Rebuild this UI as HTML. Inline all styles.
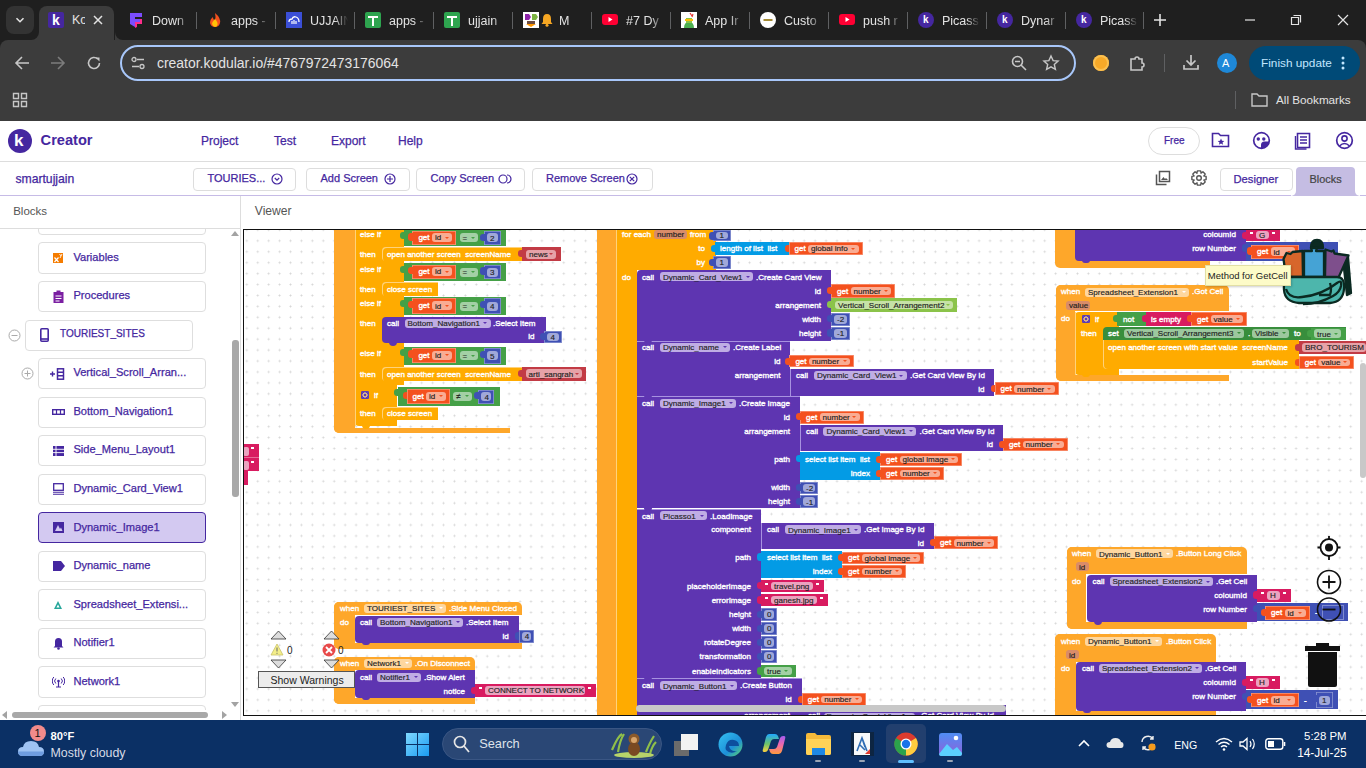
<!DOCTYPE html>
<html><head><meta charset="utf-8">
<style>
*{box-sizing:border-box;margin:0;padding:0}
html,body{width:1366px;height:768px;overflow:hidden;background:#fff;font-family:"Liberation Sans",sans-serif}
.a{position:absolute}
.t{white-space:nowrap}
</style></head><body>

<div class="a" style="left:0.0px;top:0.0px;width:1366.0px;height:50.0px;background:#1f1f1f;"></div>
<div class="a" style="left:6.0px;top:6.0px;width:28.0px;height:28.0px;background:#333333;border-radius:8px"></div>
<svg class="a" style="left:14px;top:14px" width="12" height="12" viewBox="0 0 12 12"><path d="M2.5 4.2l3.5 3.5 3.5-3.5" fill="none" stroke="#e3e3e3" stroke-width="1.6"/></svg>
<div class="a" style="left:39.3px;top:6.0px;width:75.2px;height:34.0px;background:#3c3c3c;border-radius:8px 8px 0 0"></div>
<div class="a" style="left:31.3px;top:32.0px;width:8.0px;height:8.0px;background:#3c3c3c;"></div>
<div class="a" style="left:31.3px;top:32.0px;width:8.0px;height:8.0px;background:#1f1f1f;border-bottom-right-radius:8px"></div>
<div class="a" style="left:114.5px;top:32.0px;width:8.0px;height:8.0px;background:#3c3c3c;"></div>
<div class="a" style="left:114.5px;top:32.0px;width:8.0px;height:8.0px;background:#1f1f1f;border-bottom-left-radius:8px"></div>
<div class="a" style="left:48.0px;top:12.0px;width:16.0px;height:16.0px;background:#4527a0;border-radius:2px"></div>
<div class="a t" style="left:52.0px;top:12.0px;height:16px;line-height:16px;color:#fff;font-size:14px;font-weight:bold">k</div>
<div class="a t" style="left:72px;top:13px;width:13px;overflow:hidden;color:#e3e3e3;font-size:12.5px;line-height:15px">Ko</div>
<svg class="a" style="left:92px;top:14px" width="12" height="12" viewBox="0 0 12 12"><path d="M2 2l8 8M10 2l-8 8" stroke="#e3e3e3" stroke-width="1.5"/></svg>
<svg class="a" style="left:128px;top:12px" width="16" height="16" viewBox="0 0 16 16"><path d="M2 1h12v4H7v2h6v3H7v5l-5-3z" fill="#7b4dff"/><path d="M7 10h5v-3h2v5H9v3l-2 1z" fill="#ff2d8a"/></svg>
<div class="a t" style="left:152px;top:14px;width:38px;overflow:hidden;color:#e3e3e3;font-size:12.5px;line-height:15px;-webkit-mask-image:linear-gradient(90deg,#000 65%,transparent)">Down</div>
<div class="a" style="left:196.0px;top:12.0px;width:1.0px;height:17.0px;background:#5f6062;"></div>
<svg class="a" style="left:207px;top:12px" width="16" height="16" viewBox="0 0 16 16"><path d="M8 1q6 5 5 10-1 4-5 4t-5-4q0-4 3-6 0 3 2 3 1-3 0-7z" fill="#f4511e"/><path d="M8 7q3 3 2.5 5.5T8 15t-3-3q0-2 3-5z" fill="#ffc107"/></svg>
<div class="a t" style="left:231px;top:14px;width:38px;overflow:hidden;color:#e3e3e3;font-size:12.5px;line-height:15px;-webkit-mask-image:linear-gradient(90deg,#000 65%,transparent)">apps -</div>
<div class="a" style="left:275.0px;top:12.0px;width:1.0px;height:17.0px;background:#5f6062;"></div>
<svg class="a" style="left:286px;top:12px" width="16" height="16" viewBox="0 0 16 16"><rect width="16" height="16" fill="#3b4fd6"/><path d="M3 10q0-3 3-3 1-3 4-2 3 1 3 5" fill="none" stroke="#fff" stroke-width="1.3"/><path d="M6 9v3M8 8v4M10 9v3" stroke="#fff" stroke-width="1.2"/></svg>
<div class="a t" style="left:310px;top:14px;width:38px;overflow:hidden;color:#e3e3e3;font-size:12.5px;line-height:15px;-webkit-mask-image:linear-gradient(90deg,#000 65%,transparent)">UJJAIN</div>
<div class="a" style="left:354.0px;top:12.0px;width:1.0px;height:17.0px;background:#5f6062;"></div>
<svg class="a" style="left:365px;top:12px" width="16" height="16" viewBox="0 0 16 16"><rect width="16" height="16" rx="2" fill="#2ea44f"/><path d="M3 5h10M8 5v9" stroke="#fff" stroke-width="2"/></svg>
<div class="a t" style="left:389px;top:14px;width:38px;overflow:hidden;color:#e3e3e3;font-size:12.5px;line-height:15px;-webkit-mask-image:linear-gradient(90deg,#000 65%,transparent)">apps -</div>
<div class="a" style="left:433.0px;top:12.0px;width:1.0px;height:17.0px;background:#5f6062;"></div>
<svg class="a" style="left:444px;top:12px" width="16" height="16" viewBox="0 0 16 16"><rect width="16" height="16" rx="2" fill="#2ea44f"/><path d="M3 5h10M8 5v9" stroke="#fff" stroke-width="2"/></svg>
<div class="a t" style="left:468px;top:14px;width:38px;overflow:hidden;color:#e3e3e3;font-size:12.5px;line-height:15px;-webkit-mask-image:linear-gradient(90deg,#000 65%,transparent)">ujjain</div>
<div class="a" style="left:512.0px;top:12.0px;width:1.0px;height:17.0px;background:#5f6062;"></div>
<svg class="a" style="left:523px;top:12px" width="16" height="16" viewBox="0 0 16 16"><rect width="16" height="16" fill="#fff"/><path d="M2 2l4 0 2 3-2 3H2z" fill="#8e24aa"/><path d="M9 2h4l2 3-2 3H9z" fill="#7cb342"/><path d="M4 9h8v3H4z" fill="#6d4c41"/><path d="M3 12l5 3 5-3z" fill="#ff9800"/></svg>
<svg class="a" style="left:541px;top:13px" width="12" height="14" viewBox="0 0 12 14"><path d="M6 1q4 0 4 5v3l1.5 2H.5L2 9V6q0-5 4-5z" fill="#f5a623"/><circle cx="6" cy="12.3" r="1.5" fill="#f5a623"/></svg>
<div class="a t" style="left:559px;top:14px;width:26px;overflow:hidden;color:#e3e3e3;font-size:12.5px;line-height:15px;-webkit-mask-image:linear-gradient(90deg,#000 65%,transparent)">M</div>
<div class="a" style="left:591.0px;top:12.0px;width:1.0px;height:17.0px;background:#5f6062;"></div>
<svg class="a" style="left:602px;top:13px" width="16" height="14" viewBox="0 0 16 14"><rect y="1" width="16" height="11" rx="3" fill="#ff0033"/><path d="M6.5 4v5l4-2.5z" fill="#fff"/></svg>
<div class="a t" style="left:626px;top:14px;width:38px;overflow:hidden;color:#e3e3e3;font-size:12.5px;line-height:15px;-webkit-mask-image:linear-gradient(90deg,#000 65%,transparent)">#7 Dy</div>
<div class="a" style="left:670.0px;top:12.0px;width:1.0px;height:17.0px;background:#5f6062;"></div>
<svg class="a" style="left:681px;top:12px" width="16" height="16" viewBox="0 0 16 16"><rect width="16" height="16" fill="#fff"/><path d="M3 16q0-6 5-6t5 6z" fill="#4caf50"/><path d="M5 6h6v5H5z" fill="#8bc34a"/><path d="M9 1l2 3M12 2l-1 3" stroke="#e53935" stroke-width="1.2"/><path d="M4 8h8" stroke="#ffc107" stroke-width="2"/></svg>
<div class="a t" style="left:705px;top:14px;width:38px;overflow:hidden;color:#e3e3e3;font-size:12.5px;line-height:15px;-webkit-mask-image:linear-gradient(90deg,#000 65%,transparent)">App Ir</div>
<div class="a" style="left:749.0px;top:12.0px;width:1.0px;height:17.0px;background:#5f6062;"></div>
<svg class="a" style="left:760px;top:12px" width="16" height="16" viewBox="0 0 16 16"><circle cx="8" cy="8" r="8" fill="#fff"/><path d="M3.5 8h9" stroke="#8d6e00" stroke-width="1.6"/></svg>
<div class="a t" style="left:784px;top:14px;width:38px;overflow:hidden;color:#e3e3e3;font-size:12.5px;line-height:15px;-webkit-mask-image:linear-gradient(90deg,#000 65%,transparent)">Custo</div>
<div class="a" style="left:828.0px;top:12.0px;width:1.0px;height:17.0px;background:#5f6062;"></div>
<svg class="a" style="left:839px;top:13px" width="16" height="14" viewBox="0 0 16 14"><rect y="1" width="16" height="11" rx="3" fill="#ff0033"/><path d="M6.5 4v5l4-2.5z" fill="#fff"/></svg>
<div class="a t" style="left:863px;top:14px;width:38px;overflow:hidden;color:#e3e3e3;font-size:12.5px;line-height:15px;-webkit-mask-image:linear-gradient(90deg,#000 65%,transparent)">push r</div>
<div class="a" style="left:907.0px;top:12.0px;width:1.0px;height:17.0px;background:#5f6062;"></div>
<div class="a" style="left:918.0px;top:12.0px;width:16.0px;height:16.0px;background:#4527a0;border-radius:50%"></div>
<div class="a t" style="left:923.0px;top:13.0px;height:14px;line-height:14px;color:#fff;font-size:10px;font-weight:bold">k</div>
<div class="a t" style="left:942px;top:14px;width:38px;overflow:hidden;color:#e3e3e3;font-size:12.5px;line-height:15px;-webkit-mask-image:linear-gradient(90deg,#000 65%,transparent)">Picass</div>
<div class="a" style="left:986.0px;top:12.0px;width:1.0px;height:17.0px;background:#5f6062;"></div>
<div class="a" style="left:997.0px;top:12.0px;width:16.0px;height:16.0px;background:#4527a0;border-radius:50%"></div>
<div class="a t" style="left:1002.0px;top:13.0px;height:14px;line-height:14px;color:#fff;font-size:10px;font-weight:bold">k</div>
<div class="a t" style="left:1021px;top:14px;width:38px;overflow:hidden;color:#e3e3e3;font-size:12.5px;line-height:15px;-webkit-mask-image:linear-gradient(90deg,#000 65%,transparent)">Dynar</div>
<div class="a" style="left:1065.0px;top:12.0px;width:1.0px;height:17.0px;background:#5f6062;"></div>
<div class="a" style="left:1076.0px;top:12.0px;width:16.0px;height:16.0px;background:#4527a0;border-radius:50%"></div>
<div class="a t" style="left:1081.0px;top:13.0px;height:14px;line-height:14px;color:#fff;font-size:10px;font-weight:bold">k</div>
<div class="a t" style="left:1100px;top:14px;width:38px;overflow:hidden;color:#e3e3e3;font-size:12.5px;line-height:15px;-webkit-mask-image:linear-gradient(90deg,#000 65%,transparent)">Picass</div>
<div class="a" style="left:1143.0px;top:12.0px;width:1.0px;height:17.0px;background:#5f6062;"></div>
<svg class="a" style="left:1153px;top:13px" width="14" height="14" viewBox="0 0 14 14"><path d="M7 1v12M1 7h12" stroke="#e3e3e3" stroke-width="1.6"/></svg>
<svg class="a" style="left:1244px;top:14px" width="12" height="12" viewBox="0 0 12 12"><path d="M1 6h10" stroke="#e3e3e3" stroke-width="1.2"/></svg>
<svg class="a" style="left:1290px;top:14px" width="12" height="12" viewBox="0 0 12 12"><path d="M1.5 3.5h7v7h-7z M3.5 1.5h7v7" fill="none" stroke="#e3e3e3" stroke-width="1.2"/></svg>
<svg class="a" style="left:1337px;top:14px" width="12" height="12" viewBox="0 0 12 12"><path d="M1 1l10 10M11 1l-10 10" stroke="#e3e3e3" stroke-width="1.2"/></svg>
<div class="a" style="left:0.0px;top:40.0px;width:1366.0px;height:81.0px;background:#3c3c3c;border-radius:8px 8px 0 0"></div>
<svg class="a" style="left:14px;top:55px" width="16" height="16" viewBox="0 0 16 16"><path d="M15 8H2M8 2L2 8l6 6" fill="none" stroke="#c7c7c7" stroke-width="1.6"/></svg>
<svg class="a" style="left:50px;top:55px" width="16" height="16" viewBox="0 0 16 16"><path d="M1 8h13M8 2l6 6-6 6" fill="none" stroke="#7c7c7c" stroke-width="1.6"/></svg>
<svg class="a" style="left:86px;top:55px" width="16" height="16" viewBox="0 0 16 16"><path d="M13.5 8A5.5 5.5 0 1 1 11.8 4" fill="none" stroke="#c7c7c7" stroke-width="1.6"/><path d="M9.5 2.5h4v4z" fill="#c7c7c7"/></svg>
<div class="a" style="left:120.0px;top:45.0px;width:956.0px;height:36.0px;background:#3c3c3c;border:2px solid #a8c7fa;border-radius:18px"></div>
<svg class="a" style="left:131px;top:56px" width="14" height="14" viewBox="0 0 14 14"><circle cx="3" cy="3.5" r="2" fill="none" stroke="#c7c7c7" stroke-width="1.3"/><path d="M6 3.5h7M1 10.5h7" stroke="#c7c7c7" stroke-width="1.3"/><circle cx="11" cy="10.5" r="2" fill="none" stroke="#c7c7c7" stroke-width="1.3"/></svg>
<div class="a t" style="left:157.0px;top:54.0px;height:18px;line-height:18px;color:#e3e3e3;font-size:13.95px;">creator.kodular.io/#4767972473176064</div>
<svg class="a" style="left:1010px;top:54px" width="18" height="18" viewBox="0 0 18 18"><circle cx="7.5" cy="7.5" r="5" fill="none" stroke="#c7c7c7" stroke-width="1.6"/><path d="M11 11l5 5M5 7.5h5" stroke="#c7c7c7" stroke-width="1.6"/></svg>
<svg class="a" style="left:1042px;top:54px" width="18" height="18" viewBox="0 0 18 18"><path d="M9 2l2.1 4.6 5 .5-3.8 3.4 1.1 4.9L9 12.8 4.6 15.4l1.1-4.9L1.9 7.1l5-.5z" fill="none" stroke="#c7c7c7" stroke-width="1.4"/></svg>
<div class="a" style="left:1093.0px;top:55.0px;width:16.0px;height:16.0px;background:#f7a928;border-radius:50%;box-shadow:inset 0 0 0 2px #fbc050"></div>
<svg class="a" style="left:1128px;top:54px" width="18" height="18" viewBox="0 0 18 18"><path d="M3 5h4a2 2 0 0 1 4 0h3v4a2 2 0 0 1 0 4v3H3z" fill="none" stroke="#c7c7c7" stroke-width="1.6"/></svg>
<div class="a" style="left:1164.0px;top:54.0px;width:1.0px;height:18.0px;background:#5f6062;"></div>
<svg class="a" style="left:1182px;top:53px" width="18" height="18" viewBox="0 0 18 18"><path d="M9 2v10M4.5 7.5L9 12l4.5-4.5M2 12v4h14v-4" fill="none" stroke="#c7c7c7" stroke-width="1.7"/></svg>
<div class="a" style="left:1217.0px;top:53.0px;width:20.0px;height:20.0px;background:#1a73e8;border-radius:50%;background:#1e88d8"></div>
<div class="a t" style="left:1222.0px;top:56.0px;height:14px;line-height:14px;color:#fff;font-size:11px;">A</div>
<div class="a" style="left:1249.0px;top:46.0px;width:111.0px;height:34.0px;background:#004a77;border-radius:17px"></div>
<div class="a t" style="left:1261.0px;top:54.0px;height:18px;line-height:18px;color:#c2e7ff;font-size:11.8px;">Finish update</div>
<svg class="a" style="left:1339px;top:55px" width="8" height="16" viewBox="0 0 8 16"><circle cx="4" cy="3" r="1.5" fill="#c2e7ff"/><circle cx="4" cy="8" r="1.5" fill="#c2e7ff"/><circle cx="4" cy="13" r="1.5" fill="#c2e7ff"/></svg>
<svg class="a" style="left:12px;top:92px" width="16" height="16" viewBox="0 0 16 16"><path d="M1.5 1.5h5v5h-5zM9.5 1.5h5v5h-5zM1.5 9.5h5v5h-5zM9.5 9.5h5v5h-5z" fill="none" stroke="#c7c7c7" stroke-width="1.4"/></svg>
<div class="a" style="left:1235.0px;top:91.0px;width:1.0px;height:18.0px;background:#5f6062;"></div>
<svg class="a" style="left:1251px;top:92px" width="17" height="15" viewBox="0 0 17 15"><path d="M1 2h5l2 2h8v10H1z" fill="none" stroke="#c7c7c7" stroke-width="1.4"/></svg>
<div class="a t" style="left:1276.0px;top:92.0px;height:16px;line-height:16px;color:#e3e3e3;font-size:11.7px;">All Bookmarks</div>
<div class="a" style="left:0.0px;top:121.0px;width:1366.0px;height:40.0px;background:#ffffff;"></div>
<div class="a" style="left:0.0px;top:161.0px;width:1366.0px;height:1.0px;background:#dddddd;"></div>
<div class="a" style="left:8.0px;top:129.0px;width:24.0px;height:24.0px;background:#4527a0;border-radius:50%"></div>
<div class="a t" style="left:14.0px;top:131.0px;height:20px;line-height:20px;color:#fff;font-size:17px;font-weight:bold">k</div>
<div class="a t" style="left:40.6px;top:130.0px;height:20px;line-height:20px;color:#4527a0;font-size:14.6px;font-weight:bold">Creator</div>
<div class="a t" style="left:201.0px;top:132.0px;height:18px;line-height:18px;color:#4527a0;font-size:12px;-webkit-text-stroke:0.25px #4527a0">Project</div>
<div class="a t" style="left:274.0px;top:132.0px;height:18px;line-height:18px;color:#4527a0;font-size:12px;-webkit-text-stroke:0.25px #4527a0">Test</div>
<div class="a t" style="left:331.0px;top:132.0px;height:18px;line-height:18px;color:#4527a0;font-size:12px;-webkit-text-stroke:0.25px #4527a0">Export</div>
<div class="a t" style="left:398.0px;top:132.0px;height:18px;line-height:18px;color:#4527a0;font-size:12px;-webkit-text-stroke:0.25px #4527a0">Help</div>
<div class="a" style="left:1148.0px;top:127.0px;width:52.0px;height:28.0px;background:#fff;border:1px solid #dddddd;border-radius:14px"></div>
<div class="a t" style="left:1164.0px;top:133.0px;height:16px;line-height:16px;color:#4527a0;font-size:10px;-webkit-text-stroke:0.25px #4527a0">Free</div>
<svg class="a" style="left:1211px;top:131px" width="19" height="18" viewBox="0 0 19 18"><path d="M1.5 2.5h6l2 2h8v11h-16z" fill="none" stroke="#4527a0" stroke-width="1.6"/><path d="M10 7.5l1 2.2 2.3.2-1.8 1.5.6 2.3-2.1-1.3-2.1 1.3.6-2.3-1.8-1.5 2.3-.2z" fill="#4527a0"/></svg>
<svg class="a" style="left:1252px;top:131px" width="19" height="19" viewBox="0 0 19 19"><circle cx="9.5" cy="9.5" r="7.8" fill="none" stroke="#4527a0" stroke-width="1.7"/><circle cx="6.3" cy="8" r="1.7" fill="#4527a0"/><circle cx="11.8" cy="8" r="1.7" fill="#4527a0"/><path d="M9 17.3A7.8 7.8 0 0 0 17.3 10.5H12.5q-3.5 0-3.5 3.5z" fill="#4527a0"/></svg>
<svg class="a" style="left:1294px;top:131px" width="19" height="19" viewBox="0 0 19 19"><path d="M3.5 2.5h12v14h-12zM6 6h7M6 9h7M6 12h7" fill="none" stroke="#4527a0" stroke-width="1.6"/><path d="M1.5 5v13h11" fill="none" stroke="#4527a0" stroke-width="1.4"/></svg>
<svg class="a" style="left:1335px;top:131px" width="19" height="19" viewBox="0 0 19 19"><circle cx="9.5" cy="9.5" r="7.8" fill="none" stroke="#4527a0" stroke-width="1.7"/><circle cx="9.5" cy="7.5" r="2.6" fill="none" stroke="#4527a0" stroke-width="1.6"/><path d="M4.5 15q5-5 10 0" fill="none" stroke="#4527a0" stroke-width="1.6"/></svg>
<div class="a" style="left:0.0px;top:194.8px;width:1366.0px;height:1.1px;background:#c6bbe6;"></div>
<div class="a t" style="left:15.4px;top:170.0px;height:18px;line-height:18px;color:#4527a0;font-size:12.2px;-webkit-text-stroke:0.25px #4527a0">smartujjain</div>
<div class="a" style="left:193.0px;top:167.5px;width:103.0px;height:23.0px;background:#fff;border:1px solid #dddddd;border-radius:4px"></div>
<div class="a t" style="left:207.5px;top:170.3px;height:16px;line-height:16px;color:#4527a0;font-size:11px;-webkit-text-stroke:0.25px #4527a0">TOURIES...</div>
<svg class="a" style="left:271px;top:173px" width="12" height="12" viewBox="0 0 12 12"><circle cx="6" cy="6" r="5" fill="none" stroke="#4527a0" stroke-width="1.2"/><path d="M3.8 5l2.2 2.2L8.2 5" fill="none" stroke="#4527a0" stroke-width="1.2"/></svg>
<div class="a" style="left:306.0px;top:167.5px;width:104.0px;height:23.0px;background:#fff;border:1px solid #dddddd;border-radius:4px"></div>
<div class="a t" style="left:320.5px;top:170.3px;height:16px;line-height:16px;color:#4527a0;font-size:11px;-webkit-text-stroke:0.25px #4527a0">Add Screen</div>
<svg class="a" style="left:384px;top:173px" width="12" height="12" viewBox="0 0 12 12"><circle cx="6" cy="6" r="5" fill="none" stroke="#4527a0" stroke-width="1.2"/><path d="M6 3v6M3 6h6" stroke="#4527a0" stroke-width="1.2"/></svg>
<div class="a" style="left:416.0px;top:167.5px;width:108.5px;height:23.0px;background:#fff;border:1px solid #dddddd;border-radius:4px"></div>
<div class="a t" style="left:430.5px;top:170.3px;height:16px;line-height:16px;color:#4527a0;font-size:11px;-webkit-text-stroke:0.25px #4527a0">Copy Screen</div>
<svg class="a" style="left:498px;top:173px" width="14" height="12" viewBox="0 0 14 12"><circle cx="5" cy="6" r="4" fill="none" stroke="#4527a0" stroke-width="1.2"/><path d="M9 2a4 4 0 0 1 0 8" fill="none" stroke="#4527a0" stroke-width="1.2"/></svg>
<div class="a" style="left:531.5px;top:167.5px;width:121.0px;height:23.0px;background:#fff;border:1px solid #dddddd;border-radius:4px"></div>
<div class="a t" style="left:546.0px;top:170.3px;height:16px;line-height:16px;color:#4527a0;font-size:11px;-webkit-text-stroke:0.25px #4527a0">Remove Screen</div>
<svg class="a" style="left:626px;top:173px" width="12" height="12" viewBox="0 0 12 12"><circle cx="6" cy="6" r="5" fill="none" stroke="#4527a0" stroke-width="1.2"/><path d="M3.8 3.8l4.4 4.4M8.2 3.8l-4.4 4.4" stroke="#4527a0" stroke-width="1.2"/></svg>
<svg class="a" style="left:1155px;top:170px" width="16" height="16" viewBox="0 0 16 16"><path d="M4.5 1.5h10v10h-10z" fill="none" stroke="#555" stroke-width="1.5"/><path d="M1.5 4.5v10h10" fill="none" stroke="#555" stroke-width="1.5"/><path d="M6 10l2.5-3 1.5 2 1-1 2 2z" fill="#555"/></svg>
<svg class="a" style="left:1191px;top:170px" width="16" height="16" viewBox="0 0 16 16"><path d="M15.12 6.41 L15.12 9.59 L12.84 10.16 L12.95 9.89 L14.16 11.91 L11.91 14.16 L9.89 12.95 L10.16 12.84 L9.59 15.12 L6.41 15.12 L5.84 12.84 L6.11 12.95 L4.09 14.16 L1.84 11.91 L3.05 9.89 L3.16 10.16 L0.88 9.59 L0.88 6.41 L3.16 5.84 L3.05 6.11 L1.84 4.09 L4.09 1.84 L6.11 3.05 L5.84 3.16 L6.41 0.88 L9.59 0.88 L10.16 3.16 L9.89 3.05 L11.91 1.84 L14.16 4.09 L12.95 6.11 L12.84 5.84Z" fill="none" stroke="#555" stroke-width="1.4" stroke-linejoin="round"/><circle cx="8" cy="8" r="2.3" fill="none" stroke="#555" stroke-width="1.4"/></svg>
<div class="a" style="left:1219.5px;top:167.5px;width:73.0px;height:23.0px;background:#fff;border:1px solid #dddddd;border-radius:4px"></div>
<div class="a t" style="left:1233.5px;top:171.0px;height:16px;line-height:16px;color:#4527a0;font-size:11.2px;-webkit-text-stroke:0.25px #4527a0">Designer</div>
<div class="a" style="left:1296.0px;top:167.0px;width:59.0px;height:29.0px;background:#c5bde3;border-radius:4px 4px 0 0"></div>
<div class="a" style="left:1291.0px;top:190.0px;width:5.0px;height:5.5px;background:#c5bde3;"></div>
<div class="a" style="left:1291.0px;top:190.0px;width:5.0px;height:5.5px;background:#fff;border-bottom-right-radius:5px"></div>
<div class="a" style="left:1355.0px;top:190.0px;width:5.0px;height:5.5px;background:#c5bde3;"></div>
<div class="a" style="left:1355.0px;top:190.0px;width:5.0px;height:5.5px;background:#fff;border-bottom-left-radius:5px"></div>
<div class="a t" style="left:1309.6px;top:171.0px;height:16px;line-height:16px;color:#444;font-size:10.9px;-webkit-text-stroke:0.2px #444">Blocks</div>
<div class="a t" style="left:13.2px;top:202.0px;height:18px;line-height:18px;color:#555;font-size:11.5px;">Blocks</div>
<div class="a t" style="left:254.8px;top:202.0px;height:18px;line-height:18px;color:#555;font-size:12.1px;">Viewer</div>
<div class="a" style="left:0.0px;top:228.0px;width:241.0px;height:1.0px;background:#dddddd;"></div>
<div class="a" style="left:240.0px;top:196.0px;width:1.0px;height:524.0px;background:#dddddd;"></div>
<div class="a" style="left:0;top:229px;width:240px;height:481px;overflow:hidden">
<div class="a" style="left:38.4px;top:-25.1px;width:167.3px;height:31.3px;background:#fff;border:1px solid #dedede;border-radius:4px"></div>
<div class="a" style="left:38.4px;top:13.4px;width:167.3px;height:31.3px;background:#fff;border:1px solid #dedede;border-radius:4px"></div>
<div class="a t" style="left:73.4px;top:19.7px;height:16px;line-height:16px;color:#4527a0;font-size:11.1px;-webkit-text-stroke:0.25px #4527a0">Variables</div>
<svg class="a" style="left:53px;top:23.900000000000006px" width="10" height="10" viewBox="0 0 10 10"><rect width="10" height="10" fill="#f57c00"/><path d="M1.5 4.5l4 4.5M5.5 4.5l-4 4.5" stroke="#fff" stroke-width="1.2"/><path d="M6.5 1l1.2 1.8M9 1L7 5" stroke="#fff" stroke-width=".9"/></svg>
<div class="a" style="left:38.4px;top:51.9px;width:167.3px;height:31.3px;background:#fff;border:1px solid #dedede;border-radius:4px"></div>
<div class="a t" style="left:73.4px;top:58.2px;height:16px;line-height:16px;color:#4527a0;font-size:11.1px;-webkit-text-stroke:0.25px #4527a0">Procedures</div>
<svg class="a" style="left:53px;top:60.94999999999999px" width="11" height="13" viewBox="0 0 11 13"><path d="M0.5 2h10v11h-10z" fill="#7b1fa2"/><path d="M3.5 0.5h4v3h-4z" fill="#7b1fa2"/><path d="M2.5 6h6M2.5 8.5h6M2.5 11h4" stroke="#fff" stroke-width="1"/></svg>
<div class="a" style="left:25.4px;top:90.5px;width:167.2px;height:31.3px;background:#fff;border:1px solid #dedede;border-radius:4px"></div>
<div class="a t" style="left:60.0px;top:96.8px;height:16px;line-height:16px;color:#4527a0;font-size:10px;-webkit-text-stroke:0.25px #4527a0">TOURIEST_SITES</div>
<svg class="a" style="left:40px;top:99.0px" width="9" height="14" viewBox="0 0 9 14"><rect x="0.8" y="0.8" width="7.4" height="12.4" rx="1" fill="none" stroke="#4527a0" stroke-width="1.6"/><path d="M1 11h7" stroke="#4527a0" stroke-width="1.6"/></svg>
<div class="a" style="left:37.5px;top:129.1px;width:168.2px;height:31.3px;background:#fff;border:1px solid #dedede;border-radius:4px"></div>
<div class="a t" style="left:73.4px;top:135.4px;height:16px;line-height:16px;color:#4527a0;font-size:11.1px;-webkit-text-stroke:0.25px #4527a0">Vertical_Scroll_Arran...</div>
<svg class="a" style="left:49px;top:138.55px" width="16" height="12" viewBox="0 0 16 12"><path d="M1 6h5M3.5 3.5v5" stroke="#4527a0" stroke-width="1.4"/><rect x="8.5" y="0.8" width="6" height="10.4" fill="none" stroke="#4527a0" stroke-width="1.5"/><path d="M8.5 4.3h6M8.5 7.7h6" stroke="#4527a0" stroke-width="1.4"/></svg>
<div class="a" style="left:38.4px;top:167.6px;width:167.3px;height:31.3px;background:#fff;border:1px solid #dedede;border-radius:4px"></div>
<div class="a t" style="left:73.4px;top:173.9px;height:16px;line-height:16px;color:#4527a0;font-size:11.1px;-webkit-text-stroke:0.25px #4527a0">Bottom_Navigation1</div>
<svg class="a" style="left:52px;top:180.10000000000002px" width="13" height="6" viewBox="0 0 13 6"><rect x="0.7" y="0.7" width="11.6" height="4.6" fill="none" stroke="#4527a0" stroke-width="1.4"/><path d="M4.5 0.7v4.6M8.5 0.7v4.6" stroke="#4527a0" stroke-width="1.2"/></svg>
<div class="a" style="left:38.4px;top:206.1px;width:167.3px;height:31.3px;background:#fff;border:1px solid #dedede;border-radius:4px"></div>
<div class="a t" style="left:73.4px;top:212.4px;height:16px;line-height:16px;color:#4527a0;font-size:11.1px;-webkit-text-stroke:0.25px #4527a0">Side_Menu_Layout1</div>
<svg class="a" style="left:53px;top:216.64999999999998px" width="11" height="10" viewBox="0 0 11 10"><path d="M0 0h11v10H0z" fill="#4527a0"/><path d="M0 3.3h11M0 6.6h11M3 0v10" stroke="#fff" stroke-width=".9"/></svg>
<div class="a" style="left:38.4px;top:244.7px;width:167.3px;height:31.3px;background:#fff;border:1px solid #dedede;border-radius:4px"></div>
<div class="a t" style="left:73.4px;top:251.0px;height:16px;line-height:16px;color:#4527a0;font-size:11.1px;-webkit-text-stroke:0.25px #4527a0">Dynamic_Card_View1</div>
<svg class="a" style="left:53px;top:254.2px" width="11" height="12" viewBox="0 0 11 12"><rect x="0.7" y="0.7" width="9.6" height="6.6" fill="none" stroke="#4527a0" stroke-width="1.3"/><path d="M0 9.3h11M0 11.3h11" stroke="#4527a0" stroke-width="1.1"/></svg>
<div class="a" style="left:38.4px;top:283.2px;width:167.3px;height:31.3px;background:#d3c9f1;border:1px solid #4527a0;border-radius:4px"></div>
<div class="a t" style="left:73.4px;top:289.6px;height:16px;line-height:16px;color:#4527a0;font-size:11.1px;-webkit-text-stroke:0.25px #4527a0">Dynamic_Image1</div>
<svg class="a" style="left:53px;top:293.25px" width="11" height="11" viewBox="0 0 11 11"><path d="M0 0h11v11H0z" fill="#4527a0"/><path d="M2 9l3-6 2 4 1-1.5 1.5 3.5z" fill="#d3c9f1"/></svg>
<div class="a" style="left:38.4px;top:321.8px;width:167.3px;height:31.3px;background:#fff;border:1px solid #dedede;border-radius:4px"></div>
<div class="a t" style="left:73.4px;top:328.1px;height:16px;line-height:16px;color:#4527a0;font-size:11.1px;-webkit-text-stroke:0.25px #4527a0">Dynamic_name</div>
<svg class="a" style="left:53px;top:332.29999999999995px" width="12" height="10" viewBox="0 0 12 10"><path d="M0 0h8l4 5-4 5H0z" fill="#4527a0"/></svg>
<div class="a" style="left:38.4px;top:360.4px;width:167.3px;height:31.3px;background:#fff;border:1px solid #dedede;border-radius:4px"></div>
<div class="a t" style="left:73.4px;top:366.7px;height:16px;line-height:16px;color:#4527a0;font-size:11.1px;-webkit-text-stroke:0.25px #4527a0">Spreadsheet_Extensi...</div>
<svg class="a" style="left:54px;top:371.85px" width="8" height="8" viewBox="0 0 8 8"><path d="M4 0l4 8H0z" fill="#26a69a"/><path d="M4 3.5l1.6 3H2.4z" fill="#fff"/></svg>
<div class="a" style="left:38.4px;top:398.9px;width:167.3px;height:31.3px;background:#fff;border:1px solid #dedede;border-radius:4px"></div>
<div class="a t" style="left:73.4px;top:405.2px;height:16px;line-height:16px;color:#4527a0;font-size:11.1px;-webkit-text-stroke:0.25px #4527a0">Notifier1</div>
<svg class="a" style="left:53px;top:408.4px" width="11" height="13" viewBox="0 0 11 13"><path d="M5.5 1a3.5 3.5 0 0 1 3.5 3.5V9l1.5 1.5H0.5L2 9V4.5A3.5 3.5 0 0 1 5.5 1z" fill="#4527a0"/><circle cx="5.5" cy="11.5" r="1.3" fill="#4527a0"/></svg>
<div class="a" style="left:38.4px;top:437.4px;width:167.3px;height:31.3px;background:#fff;border:1px solid #dedede;border-radius:4px"></div>
<div class="a t" style="left:73.4px;top:443.7px;height:16px;line-height:16px;color:#4527a0;font-size:11.1px;-webkit-text-stroke:0.25px #4527a0">Network1</div>
<svg class="a" style="left:52px;top:446.94999999999993px" width="13" height="12" viewBox="0 0 13 12"><circle cx="6.5" cy="5" r="1.3" fill="#4527a0"/><path d="M6.5 5v6M4 11h5" stroke="#4527a0" stroke-width="1.2"/><path d="M3.8 2.5a3.5 3.5 0 0 0 0 5M9.2 2.5a3.5 3.5 0 0 1 0 5M1.8 1a6 6 0 0 0 0 8M11.2 1a6 6 0 0 1 0 8" fill="none" stroke="#4527a0" stroke-width="1"/></svg>
<div class="a" style="left:38.4px;top:476.0px;width:167.3px;height:31.3px;background:#fff;border:1px solid #dedede;border-radius:4px"></div>
</div>
<svg class="a" style="left:8px;top:329px" width="13" height="13" viewBox="0 0 13 13"><circle cx="6.5" cy="6.5" r="5.5" fill="none" stroke="#aaa" stroke-width="1"/><path d="M3.5 6.5h6" stroke="#aaa" stroke-width="1"/></svg>
<svg class="a" style="left:21px;top:367px" width="13" height="13" viewBox="0 0 13 13"><circle cx="6.5" cy="6.5" r="5.5" fill="none" stroke="#aaa" stroke-width="1"/><path d="M3.5 6.5h6M6.5 3.5v6" stroke="#aaa" stroke-width="1"/></svg>
<div class="a" style="left:231px;top:231px;width:0;height:0;border-left:4px solid transparent;border-right:4px solid transparent;border-bottom:5px solid #a3a3a3"></div>
<div class="a" style="left:232.0px;top:340.0px;width:6.5px;height:157.0px;background:#a8a8a8;border-radius:3px"></div>
<div class="a" style="left:231px;top:702px;width:0;height:0;border-left:4px solid transparent;border-right:4px solid transparent;border-top:5px solid #a3a3a3"></div>
<div class="a" style="left:2px;top:711px;width:0;height:0;border-top:4px solid transparent;border-bottom:4px solid #0000;border-right:5px solid #a3a3a3"></div>
<div class="a" style="left:12.0px;top:712.0px;width:196.0px;height:5.5px;background:#a8a8a8;border-radius:3px"></div>
<div class="a" style="left:222px;top:711px;width:0;height:0;border-top:4px solid transparent;border-bottom:4px solid transparent;border-left:5px solid #a3a3a3"></div>
<div class="a" style="left:243.0px;top:229.0px;width:1123.0px;height:487.0px;background:#fff;"></div>
<svg class="a" style="left:243px;top:229px" width="1123" height="487"><defs><pattern id="g" x="2.3" y="-0.6" width="10.93" height="10.93" patternUnits="userSpaceOnUse"><path d="M0.5 1.5h2M1.5 0.5v2" stroke="#d5d5d5" stroke-width="1"/></pattern></defs><rect width="1123" height="487" fill="url(#g)"/></svg>
<div class="a" style="left:243.0px;top:444.0px;width:15.6px;height:27.2px;background:#d81b60;"></div>
<div class="a" style="left:243.0px;top:457.3px;width:15.6px;height:1.0px;background:#e86a97;"></div>
<div class="a" style="left:243.0px;top:471.0px;width:4.5px;height:14.0px;background:#d81b60;"></div>
<div class="a" style="left:243.0px;top:447.0px;width:6.0px;height:9.0px;background:#eba3bf;border-radius:2px"></div>
<div class="a" style="left:243.0px;top:461.0px;width:6.0px;height:9.0px;background:#eba3bf;border-radius:2px"></div>
<div class="a" style="left:251.0px;top:447.0px;width:3.0px;height:2.0px;background:#fff;"></div>
<div class="a" style="left:251.0px;top:461.0px;width:3.0px;height:2.0px;background:#fff;"></div>
<div class="a" style="left:334.0px;top:229.0px;width:20.5px;height:204.0px;background:#fea72a;border-radius:0 0 0 5px"></div>
<div class="a" style="left:334.0px;top:427.8px;width:176.0px;height:5.2px;background:#fea72a;border-radius:0 0 0 5px"></div>
<div class="a" style="left:354.5px;top:229.0px;width:49.0px;height:155.5px;background:#ffab00;"></div>
<div class="a" style="left:354.5px;top:229.0px;width:1.0px;height:155.5px;background:#ffd27a;"></div>
<div class="a" style="left:403.7px;top:229.4px;width:102.0px;height:17.1px;background:#45a047;"></div>
<div class="a" style="left:399.7px;top:232.0px;width:4.5px;height:7.4px;background:#45a047;border-radius:3px 0 0 3px"></div>
<div class="a" style="left:412.4px;top:230.6px;width:44.0px;height:14.2px;background:#f4511e;box-shadow:inset 0 0 0 0.8px rgba(255,255,255,.4)"></div>
<div class="a" style="left:408.4px;top:233.2px;width:4.5px;height:7.4px;background:#f4511e;border-radius:3px 0 0 3px"></div>
<div class="a t" style="left:418.4px;top:231.2px;height:14px;line-height:14px;color:#fff;font-size:8.05px;-webkit-text-stroke:0.35px #fff;">get</div>
<div class="a" style="left:431.9px;top:233.2px;width:20.5px;height:9.0px;background:#f9ac93;border-radius:3px"></div>
<div class="a t" style="left:434.9px;top:231.4px;height:14px;line-height:14px;color:#222;font-size:8.05px;-webkit-text-stroke:0.15px #222;">id</div>
<div class="a" style="left:444.9px;top:236.5px;width:0;height:0;border-left:2px solid transparent;border-right:2px solid transparent;border-top:2.6px solid #f4511e"></div>
<div class="a" style="left:459.5px;top:233.4px;width:18.5px;height:9.0px;background:#a3d0a5;border-radius:3px"></div>
<div class="a t" style="left:462.5px;top:231.6px;height:14px;line-height:14px;color:#222;font-size:8.05px;-webkit-text-stroke:0.15px #222;">=</div>
<div class="a" style="left:470.5px;top:236.8px;width:0;height:0;border-left:2px solid transparent;border-right:2px solid transparent;border-top:2.6px solid #45a047"></div>
<div class="a" style="left:484.0px;top:230.9px;width:17.0px;height:14.1px;background:#3f50b4;box-shadow:inset 0 0 0 0.8px rgba(255,255,255,.4)"></div>
<div class="a" style="left:480.0px;top:233.5px;width:4.5px;height:7.4px;background:#3f50b4;border-radius:3px 0 0 3px"></div>
<div class="a" style="left:487.0px;top:233.4px;width:11.0px;height:9.0px;background:#a0a8d9;border-radius:3px"></div>
<div class="a t" style="left:490.0px;top:231.6px;height:14px;line-height:14px;color:#222;font-size:8.05px;-webkit-text-stroke:0.15px #222;">2</div>
<div class="a" style="left:403.7px;top:263.3px;width:102.0px;height:17.4px;background:#45a047;"></div>
<div class="a" style="left:399.7px;top:265.9px;width:4.5px;height:7.4px;background:#45a047;border-radius:3px 0 0 3px"></div>
<div class="a" style="left:412.4px;top:264.5px;width:44.0px;height:14.5px;background:#f4511e;box-shadow:inset 0 0 0 0.8px rgba(255,255,255,.4)"></div>
<div class="a" style="left:408.4px;top:267.1px;width:4.5px;height:7.4px;background:#f4511e;border-radius:3px 0 0 3px"></div>
<div class="a t" style="left:418.4px;top:265.2px;height:14px;line-height:14px;color:#fff;font-size:8.05px;-webkit-text-stroke:0.35px #fff;">get</div>
<div class="a" style="left:431.9px;top:267.2px;width:20.5px;height:9.0px;background:#f9ac93;border-radius:3px"></div>
<div class="a t" style="left:434.9px;top:265.4px;height:14px;line-height:14px;color:#222;font-size:8.05px;-webkit-text-stroke:0.15px #222;">id</div>
<div class="a" style="left:444.9px;top:270.6px;width:0;height:0;border-left:2px solid transparent;border-right:2px solid transparent;border-top:2.6px solid #f4511e"></div>
<div class="a" style="left:459.5px;top:267.5px;width:18.5px;height:9.0px;background:#a3d0a5;border-radius:3px"></div>
<div class="a t" style="left:462.5px;top:265.7px;height:14px;line-height:14px;color:#222;font-size:8.05px;-webkit-text-stroke:0.15px #222;">=</div>
<div class="a" style="left:470.5px;top:270.8px;width:0;height:0;border-left:2px solid transparent;border-right:2px solid transparent;border-top:2.6px solid #45a047"></div>
<div class="a" style="left:484.0px;top:264.8px;width:17.0px;height:14.4px;background:#3f50b4;box-shadow:inset 0 0 0 0.8px rgba(255,255,255,.4)"></div>
<div class="a" style="left:480.0px;top:267.4px;width:4.5px;height:7.4px;background:#3f50b4;border-radius:3px 0 0 3px"></div>
<div class="a" style="left:487.0px;top:267.5px;width:11.0px;height:9.0px;background:#a0a8d9;border-radius:3px"></div>
<div class="a t" style="left:490.0px;top:265.7px;height:14px;line-height:14px;color:#222;font-size:8.05px;-webkit-text-stroke:0.15px #222;">3</div>
<div class="a" style="left:403.7px;top:296.9px;width:102.0px;height:18.6px;background:#45a047;"></div>
<div class="a" style="left:399.7px;top:299.5px;width:4.5px;height:7.4px;background:#45a047;border-radius:3px 0 0 3px"></div>
<div class="a" style="left:412.4px;top:298.1px;width:44.0px;height:15.7px;background:#f4511e;box-shadow:inset 0 0 0 0.8px rgba(255,255,255,.4)"></div>
<div class="a" style="left:408.4px;top:300.7px;width:4.5px;height:7.4px;background:#f4511e;border-radius:3px 0 0 3px"></div>
<div class="a t" style="left:418.4px;top:299.4px;height:14px;line-height:14px;color:#fff;font-size:8.05px;-webkit-text-stroke:0.35px #fff;">get</div>
<div class="a" style="left:431.9px;top:301.4px;width:20.5px;height:9.0px;background:#f9ac93;border-radius:3px"></div>
<div class="a t" style="left:434.9px;top:299.6px;height:14px;line-height:14px;color:#222;font-size:8.05px;-webkit-text-stroke:0.15px #222;">id</div>
<div class="a" style="left:444.9px;top:304.8px;width:0;height:0;border-left:2px solid transparent;border-right:2px solid transparent;border-top:2.6px solid #f4511e"></div>
<div class="a" style="left:459.5px;top:301.7px;width:18.5px;height:9.0px;background:#a3d0a5;border-radius:3px"></div>
<div class="a t" style="left:462.5px;top:299.9px;height:14px;line-height:14px;color:#222;font-size:8.05px;-webkit-text-stroke:0.15px #222;">=</div>
<div class="a" style="left:470.5px;top:305.0px;width:0;height:0;border-left:2px solid transparent;border-right:2px solid transparent;border-top:2.6px solid #45a047"></div>
<div class="a" style="left:484.0px;top:298.4px;width:17.0px;height:15.6px;background:#3f50b4;box-shadow:inset 0 0 0 0.8px rgba(255,255,255,.4)"></div>
<div class="a" style="left:480.0px;top:301.0px;width:4.5px;height:7.4px;background:#3f50b4;border-radius:3px 0 0 3px"></div>
<div class="a" style="left:487.0px;top:301.7px;width:11.0px;height:9.0px;background:#a0a8d9;border-radius:3px"></div>
<div class="a t" style="left:490.0px;top:299.9px;height:14px;line-height:14px;color:#222;font-size:8.05px;-webkit-text-stroke:0.15px #222;">4</div>
<div class="a" style="left:403.7px;top:346.5px;width:102.0px;height:18.7px;background:#45a047;"></div>
<div class="a" style="left:399.7px;top:349.1px;width:4.5px;height:7.4px;background:#45a047;border-radius:3px 0 0 3px"></div>
<div class="a" style="left:412.4px;top:347.7px;width:44.0px;height:15.8px;background:#f4511e;box-shadow:inset 0 0 0 0.8px rgba(255,255,255,.4)"></div>
<div class="a" style="left:408.4px;top:350.3px;width:4.5px;height:7.4px;background:#f4511e;border-radius:3px 0 0 3px"></div>
<div class="a t" style="left:418.4px;top:349.1px;height:14px;line-height:14px;color:#fff;font-size:8.05px;-webkit-text-stroke:0.35px #fff;">get</div>
<div class="a" style="left:431.9px;top:351.1px;width:20.5px;height:9.0px;background:#f9ac93;border-radius:3px"></div>
<div class="a t" style="left:434.9px;top:349.3px;height:14px;line-height:14px;color:#222;font-size:8.05px;-webkit-text-stroke:0.15px #222;">id</div>
<div class="a" style="left:444.9px;top:354.4px;width:0;height:0;border-left:2px solid transparent;border-right:2px solid transparent;border-top:2.6px solid #f4511e"></div>
<div class="a" style="left:459.5px;top:351.4px;width:18.5px;height:9.0px;background:#a3d0a5;border-radius:3px"></div>
<div class="a t" style="left:462.5px;top:349.6px;height:14px;line-height:14px;color:#222;font-size:8.05px;-webkit-text-stroke:0.15px #222;">=</div>
<div class="a" style="left:470.5px;top:354.7px;width:0;height:0;border-left:2px solid transparent;border-right:2px solid transparent;border-top:2.6px solid #45a047"></div>
<div class="a" style="left:484.0px;top:348.0px;width:17.0px;height:15.7px;background:#3f50b4;box-shadow:inset 0 0 0 0.8px rgba(255,255,255,.4)"></div>
<div class="a" style="left:480.0px;top:350.6px;width:4.5px;height:7.4px;background:#3f50b4;border-radius:3px 0 0 3px"></div>
<div class="a" style="left:487.0px;top:351.4px;width:11.0px;height:9.0px;background:#a0a8d9;border-radius:3px"></div>
<div class="a t" style="left:490.0px;top:349.6px;height:14px;line-height:14px;color:#222;font-size:8.05px;-webkit-text-stroke:0.15px #222;">5</div>
<div class="a t" style="left:360.0px;top:227.7px;height:14px;line-height:14px;color:#fff;font-size:8.05px;-webkit-text-stroke:0.35px #fff;">else if</div>
<div class="a t" style="left:360.0px;top:262.9px;height:14px;line-height:14px;color:#fff;font-size:8.05px;-webkit-text-stroke:0.35px #fff;">else if</div>
<div class="a t" style="left:360.0px;top:297.1px;height:14px;line-height:14px;color:#fff;font-size:8.05px;-webkit-text-stroke:0.35px #fff;">else if</div>
<div class="a t" style="left:360.0px;top:346.8px;height:14px;line-height:14px;color:#fff;font-size:8.05px;-webkit-text-stroke:0.35px #fff;">else if</div>
<div class="a t" style="left:360.0px;top:247.5px;height:14px;line-height:14px;color:#fff;font-size:8.05px;-webkit-text-stroke:0.35px #fff;">then</div>
<div class="a t" style="left:360.0px;top:282.5px;height:14px;line-height:14px;color:#fff;font-size:8.05px;-webkit-text-stroke:0.35px #fff;">then</div>
<div class="a t" style="left:360.0px;top:316.5px;height:14px;line-height:14px;color:#fff;font-size:8.05px;-webkit-text-stroke:0.35px #fff;">then</div>
<div class="a t" style="left:360.0px;top:367.5px;height:14px;line-height:14px;color:#fff;font-size:8.05px;-webkit-text-stroke:0.35px #fff;">then</div>
<div class="a" style="left:382.0px;top:247.3px;width:139.5px;height:13.7px;background:#ffab00;border-radius:4px 0 0 4px;box-shadow:inset 1px 1px 0 #ffd27a"></div>
<div class="a t" style="left:387.0px;top:247.5px;height:14px;line-height:14px;color:#fff;font-size:8.05px;-webkit-text-stroke:0.35px #fff;">open another screen&nbsp; screenName</div>
<div class="a" style="left:521.5px;top:247.3px;width:39.1px;height:13.7px;background:#c23b45;"></div>
<div class="a" style="left:517.5px;top:249.9px;width:4.5px;height:7.4px;background:#c23b45;border-radius:3px 0 0 3px"></div>
<div class="a" style="left:526.0px;top:249.7px;width:30.0px;height:9.0px;background:#e6a2a8;border-radius:3px"></div>
<div class="a t" style="left:529.0px;top:247.8px;height:14px;line-height:14px;color:#222;font-size:8.05px;-webkit-text-stroke:0.15px #222;">news</div>
<div class="a" style="left:548.5px;top:252.9px;width:0;height:0;border-left:2px solid transparent;border-right:2px solid transparent;border-top:2.6px solid #c23b45"></div>
<div class="a" style="left:382.0px;top:282.0px;width:55.8px;height:13.5px;background:#ffab00;border-radius:4px 0 0 4px;box-shadow:inset 1px 1px 0 #ffd27a"></div>
<div class="a t" style="left:387.0px;top:282.5px;height:14px;line-height:14px;color:#fff;font-size:8.05px;-webkit-text-stroke:0.35px #fff;">close screen</div>
<div class="a" style="left:382.0px;top:317.0px;width:163.5px;height:26.2px;background:#5e35b1;border-radius:4px 0 0 4px"></div>
<div class="a t" style="left:387.0px;top:316.5px;height:14px;line-height:14px;color:#fff;font-size:8.05px;-webkit-text-stroke:0.35px #fff;">call</div>
<div class="a" style="left:404.5px;top:318.8px;width:86.0px;height:9.0px;background:#bfade4;border-radius:3px"></div>
<div class="a t" style="left:407.5px;top:316.9px;height:14px;line-height:14px;color:#222;font-size:8.05px;-webkit-text-stroke:0.15px #222;">Bottom_Navigation1</div>
<div class="a" style="left:483.0px;top:322.1px;width:0;height:0;border-left:2px solid transparent;border-right:2px solid transparent;border-top:2.6px solid #5e35b1"></div>
<div class="a t" style="left:493.0px;top:316.5px;height:14px;line-height:14px;color:#fff;font-size:8.05px;-webkit-text-stroke:0.35px #fff;">.Select Item</div>
<div class="a t" style="right:831.6px;top:330.0px;height:14px;line-height:14px;color:#fff;font-size:8.05px;text-align:right;-webkit-text-stroke:0.35px #fff;">id</div>
<div class="a" style="left:544.4px;top:330.5px;width:17.2px;height:12.7px;background:#3f50b4;box-shadow:inset 0 0 0 0.8px rgba(255,255,255,.4)"></div>
<div class="a" style="left:540.4px;top:333.1px;width:4.5px;height:7.4px;background:#3f50b4;border-radius:3px 0 0 3px"></div>
<div class="a" style="left:547.4px;top:332.5px;width:11.2px;height:8.7px;background:#a0a8d9;border-radius:3px"></div>
<div class="a t" style="left:550.4px;top:330.6px;height:14px;line-height:14px;color:#222;font-size:8.05px;-webkit-text-stroke:0.15px #222;">4</div>
<div class="a" style="left:382.0px;top:367.0px;width:139.9px;height:13.5px;background:#ffab00;border-radius:4px 0 0 4px;box-shadow:inset 1px 1px 0 #ffd27a"></div>
<div class="a t" style="left:387.0px;top:367.5px;height:14px;line-height:14px;color:#fff;font-size:8.05px;-webkit-text-stroke:0.35px #fff;">open another screen&nbsp; screenName</div>
<div class="a" style="left:521.9px;top:367.0px;width:64.2px;height:13.5px;background:#c23b45;"></div>
<div class="a" style="left:517.9px;top:369.6px;width:4.5px;height:7.4px;background:#c23b45;border-radius:3px 0 0 3px"></div>
<div class="a" style="left:525.5px;top:369.3px;width:56.5px;height:9.0px;background:#e6a2a8;border-radius:3px"></div>
<div class="a t" style="left:528.5px;top:367.5px;height:14px;line-height:14px;color:#222;font-size:8.05px;-webkit-text-stroke:0.15px #222;">arti_sangrah</div>
<div class="a" style="left:574.5px;top:372.6px;width:0;height:0;border-left:2px solid transparent;border-right:2px solid transparent;border-top:2.6px solid #c23b45"></div>
<div class="a" style="left:354.8px;top:384.5px;width:42.7px;height:41.9px;background:#ffab00;border-radius:0 0 0 4px"></div>
<div class="a" style="left:354.8px;top:384.5px;width:1.0px;height:41.9px;background:#ffd27a;"></div>
<svg class="a" style="left:361px;top:391px" width="8" height="8" viewBox="0 0 8 8"><rect width="8" height="8" rx="1.2" fill="#5b3bb5"/><circle cx="4" cy="4" r="1.9" fill="none" stroke="#ffd98a" stroke-width=".9"/><path d="M4 1v1.2M4 5.8V7M1 4h1.2M5.8 4H7M1.9 1.9l.9.9M5.2 5.2l.9.9M1.9 6.1l.9-.9M5.2 2.8l.9-.9" stroke="#ffd98a" stroke-width=".8"/></svg>
<div class="a t" style="left:374.0px;top:388.5px;height:14px;line-height:14px;color:#fff;font-size:8.05px;-webkit-text-stroke:0.35px #fff;">if</div>
<div class="a" style="left:397.5px;top:386.5px;width:102.5px;height:19.7px;background:#45a047;"></div>
<div class="a" style="left:393.5px;top:389.1px;width:4.5px;height:7.4px;background:#45a047;border-radius:3px 0 0 3px"></div>
<div class="a" style="left:406.5px;top:389.0px;width:43.7px;height:15.0px;background:#f4511e;box-shadow:inset 0 0 0 0.8px rgba(255,255,255,.4)"></div>
<div class="a" style="left:402.5px;top:391.6px;width:4.5px;height:7.4px;background:#f4511e;border-radius:3px 0 0 3px"></div>
<div class="a t" style="left:412.5px;top:390.0px;height:14px;line-height:14px;color:#fff;font-size:8.05px;-webkit-text-stroke:0.35px #fff;">get</div>
<div class="a" style="left:426.0px;top:392.0px;width:20.2px;height:9.0px;background:#f9ac93;border-radius:3px"></div>
<div class="a t" style="left:429.0px;top:390.2px;height:14px;line-height:14px;color:#222;font-size:8.05px;-webkit-text-stroke:0.15px #222;">id</div>
<div class="a" style="left:438.7px;top:395.3px;width:0;height:0;border-left:2px solid transparent;border-right:2px solid transparent;border-top:2.6px solid #f4511e"></div>
<div class="a" style="left:453.2px;top:391.8px;width:18.8px;height:9.0px;background:#a3d0a5;border-radius:3px"></div>
<div class="a t" style="left:456.2px;top:389.9px;height:14px;line-height:14px;color:#222;font-size:8.05px;-webkit-text-stroke:0.15px #222;">&ne;</div>
<div class="a" style="left:464.5px;top:395.1px;width:0;height:0;border-left:2px solid transparent;border-right:2px solid transparent;border-top:2.6px solid #45a047"></div>
<div class="a" style="left:478.4px;top:389.5px;width:16.1px;height:14.7px;background:#3f50b4;box-shadow:inset 0 0 0 0.8px rgba(255,255,255,.4)"></div>
<div class="a" style="left:474.4px;top:392.1px;width:4.5px;height:7.4px;background:#3f50b4;border-radius:3px 0 0 3px"></div>
<div class="a" style="left:481.4px;top:392.4px;width:10.1px;height:9.0px;background:#a0a8d9;border-radius:3px"></div>
<div class="a t" style="left:484.4px;top:390.6px;height:14px;line-height:14px;color:#222;font-size:8.05px;-webkit-text-stroke:0.15px #222;">4</div>
<div class="a t" style="left:360.0px;top:406.5px;height:14px;line-height:14px;color:#fff;font-size:8.05px;-webkit-text-stroke:0.35px #fff;">then</div>
<div class="a" style="left:382.0px;top:406.6px;width:55.7px;height:13.7px;background:#ffab00;border-radius:4px 0 0 4px;box-shadow:inset 1px 1px 0 #ffd27a"></div>
<div class="a t" style="left:387.0px;top:407.0px;height:14px;line-height:14px;color:#fff;font-size:8.05px;-webkit-text-stroke:0.35px #fff;">close screen</div>
<div class="a" style="left:596.6px;top:229.0px;width:19.7px;height:487.0px;background:#fea72a;"></div>
<div class="a" style="left:616.3px;top:229.0px;width:99.5px;height:40.5px;background:#ffab00;"></div>
<div class="a" style="left:616.3px;top:229.0px;width:20.6px;height:487.0px;background:#ffab00;"></div>
<div class="a" style="left:616.3px;top:229.0px;width:1.0px;height:487.0px;background:#ffd27a;"></div>
<div class="a t" style="left:622.0px;top:228.0px;height:14px;line-height:14px;color:#fff;font-size:8.05px;-webkit-text-stroke:0.35px #fff;">for each</div>
<div class="a" style="left:654.0px;top:230.2px;width:32.6px;height:9.0px;background:#d98c69;border-radius:3px"></div>
<div class="a t" style="left:657.0px;top:228.4px;height:14px;line-height:14px;color:#222;font-size:8.05px;-webkit-text-stroke:0.15px #222;">number</div>
<div class="a t" style="left:690.0px;top:228.0px;height:14px;line-height:14px;color:#fff;font-size:8.05px;-webkit-text-stroke:0.35px #fff;">from</div>
<div class="a" style="left:713.4px;top:229.7px;width:17.2px;height:10.9px;background:#3f50b4;box-shadow:inset 0 0 0 0.8px rgba(255,255,255,.4)"></div>
<div class="a" style="left:709.4px;top:232.3px;width:4.5px;height:7.4px;background:#3f50b4;border-radius:3px 0 0 3px"></div>
<div class="a" style="left:716.4px;top:231.7px;width:11.2px;height:6.9px;background:#a0a8d9;border-radius:3px"></div>
<div class="a t" style="left:719.4px;top:228.8px;height:14px;line-height:14px;color:#222;font-size:8.05px;-webkit-text-stroke:0.15px #222;">1</div>
<div class="a t" style="right:661.0px;top:242.0px;height:14px;line-height:14px;color:#fff;font-size:8.05px;text-align:right;-webkit-text-stroke:0.35px #fff;">to</div>
<div class="a" style="left:715.0px;top:241.9px;width:74.2px;height:13.1px;background:#039be5;"></div>
<div class="a" style="left:711.0px;top:244.5px;width:4.5px;height:7.4px;background:#039be5;border-radius:3px 0 0 3px"></div>
<div class="a t" style="left:720.0px;top:242.0px;height:14px;line-height:14px;color:#fff;font-size:8.05px;-webkit-text-stroke:0.35px #fff;">length of list&nbsp; list</div>
<div class="a" style="left:788.5px;top:242.0px;width:74.3px;height:13.4px;background:#f4511e;box-shadow:inset 0 0 0 0.8px rgba(255,255,255,.4)"></div>
<div class="a" style="left:784.5px;top:244.6px;width:4.5px;height:7.4px;background:#f4511e;border-radius:3px 0 0 3px"></div>
<div class="a t" style="left:794.5px;top:242.2px;height:14px;line-height:14px;color:#fff;font-size:8.05px;-webkit-text-stroke:0.35px #fff;">get</div>
<div class="a" style="left:808.0px;top:244.5px;width:50.8px;height:8.4px;background:#f9ac93;border-radius:3px"></div>
<div class="a t" style="left:811.0px;top:242.4px;height:14px;line-height:14px;color:#222;font-size:8.05px;-webkit-text-stroke:0.15px #222;">global info</div>
<div class="a" style="left:851.3px;top:247.5px;width:0;height:0;border-left:2px solid transparent;border-right:2px solid transparent;border-top:2.6px solid #f4511e"></div>
<div class="a t" style="right:661.0px;top:256.0px;height:14px;line-height:14px;color:#fff;font-size:8.05px;text-align:right;-webkit-text-stroke:0.35px #fff;">by</div>
<div class="a" style="left:713.4px;top:256.3px;width:17.2px;height:12.7px;background:#3f50b4;box-shadow:inset 0 0 0 0.8px rgba(255,255,255,.4)"></div>
<div class="a" style="left:709.4px;top:258.9px;width:4.5px;height:7.4px;background:#3f50b4;border-radius:3px 0 0 3px"></div>
<div class="a" style="left:716.4px;top:258.3px;width:11.2px;height:8.7px;background:#a0a8d9;border-radius:3px"></div>
<div class="a t" style="left:719.4px;top:256.3px;height:14px;line-height:14px;color:#222;font-size:8.05px;-webkit-text-stroke:0.15px #222;">1</div>
<div class="a t" style="left:622.0px;top:270.5px;height:14px;line-height:14px;color:#fff;font-size:8.05px;-webkit-text-stroke:0.35px #fff;">do</div>
<div class="a" style="left:636.9px;top:270.3px;width:194.1px;height:70.3px;background:#5e35b1;border-radius:4px 0 0 0"></div>
<div class="a t" style="left:642.0px;top:270.5px;height:14px;line-height:14px;color:#fff;font-size:8.05px;-webkit-text-stroke:0.35px #fff;">call</div>
<div class="a" style="left:660.0px;top:272.4px;width:93.0px;height:9.0px;background:#bfade4;border-radius:3px"></div>
<div class="a t" style="left:663.0px;top:270.6px;height:14px;line-height:14px;color:#222;font-size:8.05px;-webkit-text-stroke:0.15px #222;">Dynamic_Card_View1</div>
<div class="a" style="left:745.5px;top:275.7px;width:0;height:0;border-left:2px solid transparent;border-right:2px solid transparent;border-top:2.6px solid #5e35b1"></div>
<div class="a t" style="left:756.0px;top:270.5px;height:14px;line-height:14px;color:#fff;font-size:8.05px;-webkit-text-stroke:0.35px #fff;">.Create Card View</div>
<div class="a t" style="right:545.0px;top:284.5px;height:14px;line-height:14px;color:#fff;font-size:8.05px;text-align:right;-webkit-text-stroke:0.35px #fff;">id</div>
<div class="a t" style="right:545.0px;top:298.5px;height:14px;line-height:14px;color:#fff;font-size:8.05px;text-align:right;-webkit-text-stroke:0.35px #fff;">arrangement</div>
<div class="a t" style="right:545.0px;top:312.5px;height:14px;line-height:14px;color:#fff;font-size:8.05px;text-align:right;-webkit-text-stroke:0.35px #fff;">width</div>
<div class="a t" style="right:545.0px;top:326.5px;height:14px;line-height:14px;color:#fff;font-size:8.05px;text-align:right;-webkit-text-stroke:0.35px #fff;">height</div>
<div class="a" style="left:831.0px;top:284.4px;width:64.0px;height:13.4px;background:#f4511e;box-shadow:inset 0 0 0 0.8px rgba(255,255,255,.4)"></div>
<div class="a" style="left:827.0px;top:287.0px;width:4.5px;height:7.4px;background:#f4511e;border-radius:3px 0 0 3px"></div>
<div class="a t" style="left:837.0px;top:284.6px;height:14px;line-height:14px;color:#fff;font-size:8.05px;-webkit-text-stroke:0.35px #fff;">get</div>
<div class="a" style="left:850.5px;top:286.9px;width:40.5px;height:8.4px;background:#f9ac93;border-radius:3px"></div>
<div class="a t" style="left:853.5px;top:284.8px;height:14px;line-height:14px;color:#222;font-size:8.05px;-webkit-text-stroke:0.15px #222;">number</div>
<div class="a" style="left:883.5px;top:289.9px;width:0;height:0;border-left:2px solid transparent;border-right:2px solid transparent;border-top:2.6px solid #f4511e"></div>
<div class="a" style="left:831.0px;top:298.2px;width:126.3px;height:13.4px;background:#8bc34a;"></div>
<div class="a" style="left:827.0px;top:300.8px;width:4.5px;height:7.4px;background:#8bc34a;border-radius:3px 0 0 3px"></div>
<div class="a" style="left:835.0px;top:300.5px;width:118.0px;height:8.8px;background:#c6e2a6;border-radius:3px"></div>
<div class="a t" style="left:838.0px;top:298.6px;height:14px;line-height:14px;color:#222;font-size:8.05px;-webkit-text-stroke:0.15px #222;">Vertical_Scroll_Arrangement2</div>
<div class="a" style="left:945.5px;top:303.7px;width:0;height:0;border-left:2px solid transparent;border-right:2px solid transparent;border-top:2.6px solid #8bc34a"></div>
<div class="a" style="left:831.0px;top:312.5px;width:18.6px;height:13.3px;background:#3f50b4;box-shadow:inset 0 0 0 0.8px rgba(255,255,255,.4)"></div>
<div class="a" style="left:827.0px;top:315.1px;width:4.5px;height:7.4px;background:#3f50b4;border-radius:3px 0 0 3px"></div>
<div class="a" style="left:834.0px;top:314.6px;width:12.6px;height:9.0px;background:#a0a8d9;border-radius:3px"></div>
<div class="a t" style="left:837.0px;top:312.8px;height:14px;line-height:14px;color:#222;font-size:8.05px;-webkit-text-stroke:0.15px #222;">-2</div>
<div class="a" style="left:831.0px;top:326.6px;width:18.6px;height:13.0px;background:#3f50b4;box-shadow:inset 0 0 0 0.8px rgba(255,255,255,.4)"></div>
<div class="a" style="left:827.0px;top:329.2px;width:4.5px;height:7.4px;background:#3f50b4;border-radius:3px 0 0 3px"></div>
<div class="a" style="left:834.0px;top:328.6px;width:12.6px;height:9.0px;background:#a0a8d9;border-radius:3px"></div>
<div class="a t" style="left:837.0px;top:326.8px;height:14px;line-height:14px;color:#222;font-size:8.05px;-webkit-text-stroke:0.15px #222;">-1</div>
<div class="a" style="left:636.9px;top:340.6px;width:153.5px;height:55.8px;background:#5e35b1;"></div>
<div class="a" style="left:636.9px;top:340.6px;width:153.5px;height:0.8px;background:#a892e0;"></div>
<div class="a t" style="left:642.0px;top:340.5px;height:14px;line-height:14px;color:#fff;font-size:8.05px;-webkit-text-stroke:0.35px #fff;">call</div>
<div class="a" style="left:660.0px;top:342.7px;width:70.0px;height:9.0px;background:#bfade4;border-radius:3px"></div>
<div class="a t" style="left:663.0px;top:340.9px;height:14px;line-height:14px;color:#222;font-size:8.05px;-webkit-text-stroke:0.15px #222;">Dynamic_name</div>
<div class="a" style="left:722.5px;top:346.0px;width:0;height:0;border-left:2px solid transparent;border-right:2px solid transparent;border-top:2.6px solid #5e35b1"></div>
<div class="a t" style="left:733.0px;top:340.5px;height:14px;line-height:14px;color:#fff;font-size:8.05px;-webkit-text-stroke:0.35px #fff;">.Create Label</div>
<div class="a t" style="right:585.6px;top:354.5px;height:14px;line-height:14px;color:#fff;font-size:8.05px;text-align:right;-webkit-text-stroke:0.35px #fff;">id</div>
<div class="a t" style="right:585.6px;top:368.5px;height:14px;line-height:14px;color:#fff;font-size:8.05px;text-align:right;-webkit-text-stroke:0.35px #fff;">arrangement</div>
<div class="a" style="left:789.4px;top:355.0px;width:65.1px;height:12.3px;background:#f4511e;box-shadow:inset 0 0 0 0.8px rgba(255,255,255,.4)"></div>
<div class="a" style="left:785.4px;top:357.6px;width:4.5px;height:7.4px;background:#f4511e;border-radius:3px 0 0 3px"></div>
<div class="a t" style="left:795.4px;top:354.6px;height:14px;line-height:14px;color:#fff;font-size:8.05px;-webkit-text-stroke:0.35px #fff;">get</div>
<div class="a" style="left:808.9px;top:357.5px;width:41.6px;height:7.3px;background:#f9ac93;border-radius:3px"></div>
<div class="a t" style="left:811.9px;top:354.8px;height:14px;line-height:14px;color:#222;font-size:8.05px;-webkit-text-stroke:0.15px #222;">number</div>
<div class="a" style="left:843.0px;top:359.9px;width:0;height:0;border-left:2px solid transparent;border-right:2px solid transparent;border-top:2.6px solid #f4511e"></div>
<div class="a" style="left:790.4px;top:369.0px;width:203.4px;height:26.5px;background:#5e35b1;"></div>
<div class="a" style="left:790.4px;top:369.0px;width:0.8px;height:26.5px;background:#a892e0;"></div>
<div class="a t" style="left:796.0px;top:369.0px;height:14px;line-height:14px;color:#fff;font-size:8.05px;-webkit-text-stroke:0.35px #fff;">call</div>
<div class="a" style="left:814.0px;top:371.2px;width:92.6px;height:9.0px;background:#bfade4;border-radius:3px"></div>
<div class="a t" style="left:817.0px;top:369.4px;height:14px;line-height:14px;color:#222;font-size:8.05px;-webkit-text-stroke:0.15px #222;">Dynamic_Card_View1</div>
<div class="a" style="left:899.1px;top:374.6px;width:0;height:0;border-left:2px solid transparent;border-right:2px solid transparent;border-top:2.6px solid #5e35b1"></div>
<div class="a t" style="left:910.0px;top:369.0px;height:14px;line-height:14px;color:#fff;font-size:8.05px;-webkit-text-stroke:0.35px #fff;">.Get Card View By Id</div>
<div class="a t" style="right:381.5px;top:382.5px;height:14px;line-height:14px;color:#fff;font-size:8.05px;text-align:right;-webkit-text-stroke:0.35px #fff;">id</div>
<div class="a" style="left:994.5px;top:382.4px;width:64.0px;height:13.1px;background:#f4511e;box-shadow:inset 0 0 0 0.8px rgba(255,255,255,.4)"></div>
<div class="a" style="left:990.5px;top:385.0px;width:4.5px;height:7.4px;background:#f4511e;border-radius:3px 0 0 3px"></div>
<div class="a t" style="left:1000.5px;top:382.4px;height:14px;line-height:14px;color:#fff;font-size:8.05px;-webkit-text-stroke:0.35px #fff;">get</div>
<div class="a" style="left:1014.0px;top:384.9px;width:40.5px;height:8.1px;background:#f9ac93;border-radius:3px"></div>
<div class="a t" style="left:1017.0px;top:382.6px;height:14px;line-height:14px;color:#222;font-size:8.05px;-webkit-text-stroke:0.15px #222;">number</div>
<div class="a" style="left:1047.0px;top:387.8px;width:0;height:0;border-left:2px solid transparent;border-right:2px solid transparent;border-top:2.6px solid #f4511e"></div>
<div class="a" style="left:636.9px;top:396.4px;width:162.9px;height:112.1px;background:#5e35b1;"></div>
<div class="a" style="left:636.9px;top:396.4px;width:162.9px;height:0.8px;background:#a892e0;"></div>
<div class="a t" style="left:642.0px;top:396.5px;height:14px;line-height:14px;color:#fff;font-size:8.05px;-webkit-text-stroke:0.35px #fff;">call</div>
<div class="a" style="left:660.0px;top:398.7px;width:76.0px;height:9.0px;background:#bfade4;border-radius:3px"></div>
<div class="a t" style="left:663.0px;top:396.9px;height:14px;line-height:14px;color:#222;font-size:8.05px;-webkit-text-stroke:0.15px #222;">Dynamic_Image1</div>
<div class="a" style="left:728.5px;top:402.0px;width:0;height:0;border-left:2px solid transparent;border-right:2px solid transparent;border-top:2.6px solid #5e35b1"></div>
<div class="a t" style="left:739.0px;top:396.5px;height:14px;line-height:14px;color:#fff;font-size:8.05px;-webkit-text-stroke:0.35px #fff;">.Create Image</div>
<div class="a t" style="right:576.0px;top:410.5px;height:14px;line-height:14px;color:#fff;font-size:8.05px;text-align:right;-webkit-text-stroke:0.35px #fff;">id</div>
<div class="a t" style="right:576.0px;top:424.5px;height:14px;line-height:14px;color:#fff;font-size:8.05px;text-align:right;-webkit-text-stroke:0.35px #fff;">arrangement</div>
<div class="a t" style="right:576.0px;top:452.5px;height:14px;line-height:14px;color:#fff;font-size:8.05px;text-align:right;-webkit-text-stroke:0.35px #fff;">path</div>
<div class="a t" style="right:576.0px;top:481.0px;height:14px;line-height:14px;color:#fff;font-size:8.05px;text-align:right;-webkit-text-stroke:0.35px #fff;">width</div>
<div class="a t" style="right:576.0px;top:495.0px;height:14px;line-height:14px;color:#fff;font-size:8.05px;text-align:right;-webkit-text-stroke:0.35px #fff;">height</div>
<div class="a" style="left:800.0px;top:410.5px;width:63.7px;height:13.1px;background:#f4511e;box-shadow:inset 0 0 0 0.8px rgba(255,255,255,.4)"></div>
<div class="a" style="left:796.0px;top:413.1px;width:4.5px;height:7.4px;background:#f4511e;border-radius:3px 0 0 3px"></div>
<div class="a t" style="left:806.0px;top:410.6px;height:14px;line-height:14px;color:#fff;font-size:8.05px;-webkit-text-stroke:0.35px #fff;">get</div>
<div class="a" style="left:819.5px;top:413.0px;width:40.2px;height:8.1px;background:#f9ac93;border-radius:3px"></div>
<div class="a t" style="left:822.5px;top:410.8px;height:14px;line-height:14px;color:#222;font-size:8.05px;-webkit-text-stroke:0.15px #222;">number</div>
<div class="a" style="left:852.2px;top:415.9px;width:0;height:0;border-left:2px solid transparent;border-right:2px solid transparent;border-top:2.6px solid #f4511e"></div>
<div class="a" style="left:800.0px;top:424.8px;width:203.2px;height:26.2px;background:#5e35b1;"></div>
<div class="a" style="left:800.0px;top:424.8px;width:0.8px;height:26.2px;background:#a892e0;"></div>
<div class="a t" style="left:806.0px;top:424.5px;height:14px;line-height:14px;color:#fff;font-size:8.05px;-webkit-text-stroke:0.35px #fff;">call</div>
<div class="a" style="left:823.4px;top:427.1px;width:92.6px;height:9.0px;background:#bfade4;border-radius:3px"></div>
<div class="a t" style="left:826.4px;top:425.2px;height:14px;line-height:14px;color:#222;font-size:8.05px;-webkit-text-stroke:0.15px #222;">Dynamic_Card_View1</div>
<div class="a" style="left:908.5px;top:430.4px;width:0;height:0;border-left:2px solid transparent;border-right:2px solid transparent;border-top:2.6px solid #5e35b1"></div>
<div class="a t" style="left:919.5px;top:424.5px;height:14px;line-height:14px;color:#fff;font-size:8.05px;-webkit-text-stroke:0.35px #fff;">.Get Card View By Id</div>
<div class="a t" style="right:373.0px;top:438.0px;height:14px;line-height:14px;color:#fff;font-size:8.05px;text-align:right;-webkit-text-stroke:0.35px #fff;">id</div>
<div class="a" style="left:1003.0px;top:438.1px;width:64.6px;height:12.9px;background:#f4511e;box-shadow:inset 0 0 0 0.8px rgba(255,255,255,.4)"></div>
<div class="a" style="left:999.0px;top:440.7px;width:4.5px;height:7.4px;background:#f4511e;border-radius:3px 0 0 3px"></div>
<div class="a t" style="left:1009.0px;top:438.1px;height:14px;line-height:14px;color:#fff;font-size:8.05px;-webkit-text-stroke:0.35px #fff;">get</div>
<div class="a" style="left:1022.5px;top:440.6px;width:41.1px;height:7.9px;background:#f9ac93;border-radius:3px"></div>
<div class="a t" style="left:1025.5px;top:438.2px;height:14px;line-height:14px;color:#222;font-size:8.05px;-webkit-text-stroke:0.15px #222;">number</div>
<div class="a" style="left:1056.1px;top:443.4px;width:0;height:0;border-left:2px solid transparent;border-right:2px solid transparent;border-top:2.6px solid #f4511e"></div>
<div class="a" style="left:800.0px;top:452.2px;width:80.3px;height:27.7px;background:#039be5;"></div>
<div class="a" style="left:796.0px;top:454.8px;width:4.5px;height:7.4px;background:#039be5;border-radius:3px 0 0 3px"></div>
<div class="a t" style="left:805.0px;top:452.5px;height:14px;line-height:14px;color:#fff;font-size:8.05px;-webkit-text-stroke:0.35px #fff;">select list item&nbsp; list</div>
<div class="a t" style="right:496.0px;top:466.5px;height:14px;line-height:14px;color:#fff;font-size:8.05px;text-align:right;-webkit-text-stroke:0.35px #fff;">index</div>
<div class="a" style="left:880.0px;top:453.0px;width:82.4px;height:12.6px;background:#f4511e;box-shadow:inset 0 0 0 0.8px rgba(255,255,255,.4)"></div>
<div class="a" style="left:876.0px;top:455.6px;width:4.5px;height:7.4px;background:#f4511e;border-radius:3px 0 0 3px"></div>
<div class="a t" style="left:886.0px;top:452.8px;height:14px;line-height:14px;color:#fff;font-size:8.05px;-webkit-text-stroke:0.35px #fff;">get</div>
<div class="a" style="left:899.5px;top:455.5px;width:58.9px;height:7.6px;background:#f9ac93;border-radius:3px"></div>
<div class="a t" style="left:902.5px;top:453.0px;height:14px;line-height:14px;color:#222;font-size:8.05px;-webkit-text-stroke:0.15px #222;">global image</div>
<div class="a" style="left:950.9px;top:458.1px;width:0;height:0;border-left:2px solid transparent;border-right:2px solid transparent;border-top:2.6px solid #f4511e"></div>
<div class="a" style="left:880.0px;top:467.0px;width:64.0px;height:12.6px;background:#f4511e;box-shadow:inset 0 0 0 0.8px rgba(255,255,255,.4)"></div>
<div class="a" style="left:876.0px;top:469.6px;width:4.5px;height:7.4px;background:#f4511e;border-radius:3px 0 0 3px"></div>
<div class="a t" style="left:886.0px;top:466.8px;height:14px;line-height:14px;color:#fff;font-size:8.05px;-webkit-text-stroke:0.35px #fff;">get</div>
<div class="a" style="left:899.5px;top:469.5px;width:40.5px;height:7.6px;background:#f9ac93;border-radius:3px"></div>
<div class="a t" style="left:902.5px;top:467.0px;height:14px;line-height:14px;color:#222;font-size:8.05px;-webkit-text-stroke:0.15px #222;">number</div>
<div class="a" style="left:932.5px;top:472.1px;width:0;height:0;border-left:2px solid transparent;border-right:2px solid transparent;border-top:2.6px solid #f4511e"></div>
<div class="a" style="left:800.0px;top:481.5px;width:18.2px;height:12.8px;background:#3f50b4;box-shadow:inset 0 0 0 0.8px rgba(255,255,255,.4)"></div>
<div class="a" style="left:796.0px;top:484.1px;width:4.5px;height:7.4px;background:#3f50b4;border-radius:3px 0 0 3px"></div>
<div class="a" style="left:803.0px;top:483.5px;width:12.2px;height:8.8px;background:#a0a8d9;border-radius:3px"></div>
<div class="a t" style="left:806.0px;top:481.6px;height:14px;line-height:14px;color:#222;font-size:8.05px;-webkit-text-stroke:0.15px #222;">-2</div>
<div class="a" style="left:800.0px;top:495.2px;width:18.2px;height:13.3px;background:#3f50b4;box-shadow:inset 0 0 0 0.8px rgba(255,255,255,.4)"></div>
<div class="a" style="left:796.0px;top:497.8px;width:4.5px;height:7.4px;background:#3f50b4;border-radius:3px 0 0 3px"></div>
<div class="a" style="left:803.0px;top:497.4px;width:12.2px;height:9.0px;background:#a0a8d9;border-radius:3px"></div>
<div class="a t" style="left:806.0px;top:495.6px;height:14px;line-height:14px;color:#222;font-size:8.05px;-webkit-text-stroke:0.15px #222;">-1</div>
<div class="a" style="left:636.9px;top:508.5px;width:124.2px;height:169.8px;background:#5e35b1;"></div>
<div class="a" style="left:636.9px;top:508.5px;width:124.2px;height:0.8px;background:#a892e0;"></div>
<div class="a t" style="left:642.0px;top:509.5px;height:14px;line-height:14px;color:#fff;font-size:8.05px;-webkit-text-stroke:0.35px #fff;">call</div>
<div class="a" style="left:660.0px;top:511.2px;width:47.0px;height:9.0px;background:#bfade4;border-radius:3px"></div>
<div class="a t" style="left:663.0px;top:509.5px;height:14px;line-height:14px;color:#222;font-size:8.05px;-webkit-text-stroke:0.15px #222;">Picasso1</div>
<div class="a" style="left:699.5px;top:514.5px;width:0;height:0;border-left:2px solid transparent;border-right:2px solid transparent;border-top:2.6px solid #5e35b1"></div>
<div class="a t" style="left:710.0px;top:509.5px;height:14px;line-height:14px;color:#fff;font-size:8.05px;-webkit-text-stroke:0.35px #fff;">.LoadImage</div>
<div class="a t" style="right:615.0px;top:523.0px;height:14px;line-height:14px;color:#fff;font-size:8.05px;text-align:right;-webkit-text-stroke:0.35px #fff;">component</div>
<div class="a t" style="right:615.0px;top:550.5px;height:14px;line-height:14px;color:#fff;font-size:8.05px;text-align:right;-webkit-text-stroke:0.35px #fff;">path</div>
<div class="a t" style="right:615.0px;top:579.5px;height:14px;line-height:14px;color:#fff;font-size:8.05px;text-align:right;-webkit-text-stroke:0.35px #fff;">placeholderImage</div>
<div class="a t" style="right:615.0px;top:593.5px;height:14px;line-height:14px;color:#fff;font-size:8.05px;text-align:right;-webkit-text-stroke:0.35px #fff;">errorImage</div>
<div class="a t" style="right:615.0px;top:608.0px;height:14px;line-height:14px;color:#fff;font-size:8.05px;text-align:right;-webkit-text-stroke:0.35px #fff;">height</div>
<div class="a t" style="right:615.0px;top:622.0px;height:14px;line-height:14px;color:#fff;font-size:8.05px;text-align:right;-webkit-text-stroke:0.35px #fff;">width</div>
<div class="a t" style="right:615.0px;top:636.0px;height:14px;line-height:14px;color:#fff;font-size:8.05px;text-align:right;-webkit-text-stroke:0.35px #fff;">rotateDegree</div>
<div class="a t" style="right:615.0px;top:650.0px;height:14px;line-height:14px;color:#fff;font-size:8.05px;text-align:right;-webkit-text-stroke:0.35px #fff;">transformation</div>
<div class="a t" style="right:615.0px;top:664.5px;height:14px;line-height:14px;color:#fff;font-size:8.05px;text-align:right;-webkit-text-stroke:0.35px #fff;">enableIndicators</div>
<div class="a" style="left:760.5px;top:523.0px;width:173.4px;height:26.4px;background:#5e35b1;"></div>
<div class="a" style="left:760.5px;top:523.0px;width:0.8px;height:26.4px;background:#a892e0;"></div>
<div class="a t" style="left:767.0px;top:523.0px;height:14px;line-height:14px;color:#fff;font-size:8.05px;-webkit-text-stroke:0.35px #fff;">call</div>
<div class="a" style="left:785.0px;top:525.2px;width:76.0px;height:9.0px;background:#bfade4;border-radius:3px"></div>
<div class="a t" style="left:788.0px;top:523.5px;height:14px;line-height:14px;color:#222;font-size:8.05px;-webkit-text-stroke:0.15px #222;">Dynamic_Image1</div>
<div class="a" style="left:853.5px;top:528.5px;width:0;height:0;border-left:2px solid transparent;border-right:2px solid transparent;border-top:2.6px solid #5e35b1"></div>
<div class="a t" style="left:864.0px;top:523.0px;height:14px;line-height:14px;color:#fff;font-size:8.05px;-webkit-text-stroke:0.35px #fff;">.Get Image By Id</div>
<div class="a t" style="right:442.0px;top:536.5px;height:14px;line-height:14px;color:#fff;font-size:8.05px;text-align:right;-webkit-text-stroke:0.35px #fff;">id</div>
<div class="a" style="left:934.0px;top:536.3px;width:64.2px;height:13.1px;background:#f4511e;box-shadow:inset 0 0 0 0.8px rgba(255,255,255,.4)"></div>
<div class="a" style="left:930.0px;top:538.9px;width:4.5px;height:7.4px;background:#f4511e;border-radius:3px 0 0 3px"></div>
<div class="a t" style="left:940.0px;top:536.3px;height:14px;line-height:14px;color:#fff;font-size:8.05px;-webkit-text-stroke:0.35px #fff;">get</div>
<div class="a" style="left:953.5px;top:538.8px;width:40.7px;height:8.1px;background:#f9ac93;border-radius:3px"></div>
<div class="a t" style="left:956.5px;top:536.5px;height:14px;line-height:14px;color:#222;font-size:8.05px;-webkit-text-stroke:0.15px #222;">number</div>
<div class="a" style="left:986.7px;top:541.6px;width:0;height:0;border-left:2px solid transparent;border-right:2px solid transparent;border-top:2.6px solid #f4511e"></div>
<div class="a" style="left:761.0px;top:550.8px;width:81.4px;height:26.9px;background:#039be5;"></div>
<div class="a" style="left:757.0px;top:553.4px;width:4.5px;height:7.4px;background:#039be5;border-radius:3px 0 0 3px"></div>
<div class="a t" style="left:767.0px;top:550.5px;height:14px;line-height:14px;color:#fff;font-size:8.05px;-webkit-text-stroke:0.35px #fff;">select list item&nbsp; list</div>
<div class="a t" style="right:534.0px;top:564.5px;height:14px;line-height:14px;color:#fff;font-size:8.05px;text-align:right;-webkit-text-stroke:0.35px #fff;">index</div>
<div class="a" style="left:842.0px;top:551.5px;width:82.2px;height:12.5px;background:#f4511e;box-shadow:inset 0 0 0 0.8px rgba(255,255,255,.4)"></div>
<div class="a" style="left:838.0px;top:554.1px;width:4.5px;height:7.4px;background:#f4511e;border-radius:3px 0 0 3px"></div>
<div class="a t" style="left:848.0px;top:551.2px;height:14px;line-height:14px;color:#fff;font-size:8.05px;-webkit-text-stroke:0.35px #fff;">get</div>
<div class="a" style="left:861.5px;top:554.0px;width:58.7px;height:7.5px;background:#f9ac93;border-radius:3px"></div>
<div class="a t" style="left:864.5px;top:551.5px;height:14px;line-height:14px;color:#222;font-size:8.05px;-webkit-text-stroke:0.15px #222;">global image</div>
<div class="a" style="left:912.7px;top:556.5px;width:0;height:0;border-left:2px solid transparent;border-right:2px solid transparent;border-top:2.6px solid #f4511e"></div>
<div class="a" style="left:842.0px;top:565.0px;width:64.1px;height:12.5px;background:#f4511e;box-shadow:inset 0 0 0 0.8px rgba(255,255,255,.4)"></div>
<div class="a" style="left:838.0px;top:567.6px;width:4.5px;height:7.4px;background:#f4511e;border-radius:3px 0 0 3px"></div>
<div class="a t" style="left:848.0px;top:564.8px;height:14px;line-height:14px;color:#fff;font-size:8.05px;-webkit-text-stroke:0.35px #fff;">get</div>
<div class="a" style="left:861.5px;top:567.5px;width:40.6px;height:7.5px;background:#f9ac93;border-radius:3px"></div>
<div class="a t" style="left:864.5px;top:565.0px;height:14px;line-height:14px;color:#222;font-size:8.05px;-webkit-text-stroke:0.15px #222;">number</div>
<div class="a" style="left:894.6px;top:570.0px;width:0;height:0;border-left:2px solid transparent;border-right:2px solid transparent;border-top:2.6px solid #f4511e"></div>
<div class="a" style="left:761.0px;top:579.5px;width:62.9px;height:12.8px;background:#d81b60;"></div>
<div class="a" style="left:757.0px;top:582.1px;width:4.5px;height:7.4px;background:#d81b60;border-radius:3px 0 0 3px"></div>
<div class="a" style="left:765.0px;top:582.5px;width:3.0px;height:2.0px;background:#fff;"></div>
<div class="a" style="left:815.9px;top:582.5px;width:3.0px;height:2.0px;background:#fff;"></div>
<div class="a" style="left:771.0px;top:581.5px;width:41.9px;height:8.8px;background:#eba3bf;border-radius:3px"></div>
<div class="a t" style="left:774.0px;top:579.6px;height:14px;line-height:14px;color:#222;font-size:8.05px;-webkit-text-stroke:0.15px #222;">travel.png</div>
<div class="a" style="left:761.0px;top:593.7px;width:67.1px;height:12.8px;background:#d81b60;"></div>
<div class="a" style="left:757.0px;top:596.3px;width:4.5px;height:7.4px;background:#d81b60;border-radius:3px 0 0 3px"></div>
<div class="a" style="left:765.0px;top:596.7px;width:3.0px;height:2.0px;background:#fff;"></div>
<div class="a" style="left:820.1px;top:596.7px;width:3.0px;height:2.0px;background:#fff;"></div>
<div class="a" style="left:771.0px;top:595.7px;width:46.1px;height:8.8px;background:#eba3bf;border-radius:3px"></div>
<div class="a t" style="left:774.0px;top:593.8px;height:14px;line-height:14px;color:#222;font-size:8.05px;-webkit-text-stroke:0.15px #222;">ganesh.jpg</div>
<div class="a" style="left:761.0px;top:608.0px;width:16.0px;height:12.7px;background:#3f50b4;box-shadow:inset 0 0 0 0.8px rgba(255,255,255,.4)"></div>
<div class="a" style="left:757.0px;top:610.6px;width:4.5px;height:7.4px;background:#3f50b4;border-radius:3px 0 0 3px"></div>
<div class="a" style="left:764.0px;top:610.0px;width:10.0px;height:8.7px;background:#a0a8d9;border-radius:3px"></div>
<div class="a t" style="left:767.0px;top:608.1px;height:14px;line-height:14px;color:#222;font-size:8.05px;-webkit-text-stroke:0.15px #222;">0</div>
<div class="a" style="left:761.0px;top:622.0px;width:16.0px;height:12.7px;background:#3f50b4;box-shadow:inset 0 0 0 0.8px rgba(255,255,255,.4)"></div>
<div class="a" style="left:757.0px;top:624.6px;width:4.5px;height:7.4px;background:#3f50b4;border-radius:3px 0 0 3px"></div>
<div class="a" style="left:764.0px;top:624.0px;width:10.0px;height:8.7px;background:#a0a8d9;border-radius:3px"></div>
<div class="a t" style="left:767.0px;top:622.1px;height:14px;line-height:14px;color:#222;font-size:8.05px;-webkit-text-stroke:0.15px #222;">0</div>
<div class="a" style="left:761.0px;top:636.0px;width:16.0px;height:12.7px;background:#3f50b4;box-shadow:inset 0 0 0 0.8px rgba(255,255,255,.4)"></div>
<div class="a" style="left:757.0px;top:638.6px;width:4.5px;height:7.4px;background:#3f50b4;border-radius:3px 0 0 3px"></div>
<div class="a" style="left:764.0px;top:638.0px;width:10.0px;height:8.7px;background:#a0a8d9;border-radius:3px"></div>
<div class="a t" style="left:767.0px;top:636.1px;height:14px;line-height:14px;color:#222;font-size:8.05px;-webkit-text-stroke:0.15px #222;">0</div>
<div class="a" style="left:761.0px;top:650.0px;width:16.0px;height:12.7px;background:#3f50b4;box-shadow:inset 0 0 0 0.8px rgba(255,255,255,.4)"></div>
<div class="a" style="left:757.0px;top:652.6px;width:4.5px;height:7.4px;background:#3f50b4;border-radius:3px 0 0 3px"></div>
<div class="a" style="left:764.0px;top:652.0px;width:10.0px;height:8.7px;background:#a0a8d9;border-radius:3px"></div>
<div class="a t" style="left:767.0px;top:650.1px;height:14px;line-height:14px;color:#222;font-size:8.05px;-webkit-text-stroke:0.15px #222;">0</div>
<div class="a" style="left:761.0px;top:664.7px;width:34.5px;height:12.8px;background:#45a047;"></div>
<div class="a" style="left:757.0px;top:667.3px;width:4.5px;height:7.4px;background:#45a047;border-radius:3px 0 0 3px"></div>
<div class="a" style="left:764.0px;top:666.7px;width:27.5px;height:8.8px;background:#a3d0a5;border-radius:3px"></div>
<div class="a t" style="left:767.0px;top:664.8px;height:14px;line-height:14px;color:#222;font-size:8.05px;-webkit-text-stroke:0.15px #222;">true</div>
<div class="a" style="left:784.0px;top:669.9px;width:0;height:0;border-left:2px solid transparent;border-right:2px solid transparent;border-top:2.6px solid #45a047"></div>
<div class="a" style="left:636.9px;top:678.3px;width:164.8px;height:37.7px;background:#5e35b1;"></div>
<div class="a" style="left:636.9px;top:678.3px;width:164.8px;height:0.8px;background:#a892e0;"></div>
<div class="a t" style="left:642.0px;top:679.0px;height:14px;line-height:14px;color:#fff;font-size:8.05px;-webkit-text-stroke:0.35px #fff;">call</div>
<div class="a" style="left:660.0px;top:681.2px;width:77.0px;height:9.0px;background:#bfade4;border-radius:3px"></div>
<div class="a t" style="left:663.0px;top:679.5px;height:14px;line-height:14px;color:#222;font-size:8.05px;-webkit-text-stroke:0.15px #222;">Dynamic_Button1</div>
<div class="a" style="left:729.5px;top:684.5px;width:0;height:0;border-left:2px solid transparent;border-right:2px solid transparent;border-top:2.6px solid #5e35b1"></div>
<div class="a t" style="left:740.0px;top:679.0px;height:14px;line-height:14px;color:#fff;font-size:8.05px;-webkit-text-stroke:0.35px #fff;">.Create Button</div>
<div class="a t" style="right:574.3px;top:692.5px;height:14px;line-height:14px;color:#fff;font-size:8.05px;text-align:right;-webkit-text-stroke:0.35px #fff;">id</div>
<div class="a" style="left:801.7px;top:693.0px;width:64.3px;height:12.5px;background:#f4511e;box-shadow:inset 0 0 0 0.8px rgba(255,255,255,.4)"></div>
<div class="a" style="left:797.7px;top:695.6px;width:4.5px;height:7.4px;background:#f4511e;border-radius:3px 0 0 3px"></div>
<div class="a t" style="left:807.7px;top:692.8px;height:14px;line-height:14px;color:#fff;font-size:8.05px;-webkit-text-stroke:0.35px #fff;">get</div>
<div class="a" style="left:821.2px;top:695.5px;width:40.8px;height:7.5px;background:#f9ac93;border-radius:3px"></div>
<div class="a t" style="left:824.2px;top:693.0px;height:14px;line-height:14px;color:#222;font-size:8.05px;-webkit-text-stroke:0.15px #222;">number</div>
<div class="a" style="left:854.5px;top:698.0px;width:0;height:0;border-left:2px solid transparent;border-right:2px solid transparent;border-top:2.6px solid #f4511e"></div>
<div class="a" style="left:636.9px;top:705.0px;width:369.1px;height:11.0px;background:#5e35b1;"></div>
<div class="a" style="left:0;top:712.4px;width:1366px;height:2.6px;overflow:hidden"><div class="a" style="left:0;top:-712.4px;width:1366px;height:768px">
<div class="a t" style="right:576.0px;top:708.8px;height:14px;line-height:14px;color:#fff;font-size:8.05px;text-align:right;-webkit-text-stroke:0.35px #fff;">arrangement</div>
<div class="a t" style="left:808.0px;top:708.8px;height:14px;line-height:14px;color:#fff;font-size:8.05px;-webkit-text-stroke:0.35px #fff;">call</div>
<div class="a" style="left:823.7px;top:712.8px;width:91.8px;height:9.2px;background:#bfade4;border-radius:3px"></div>
<div class="a t" style="left:826.5px;top:709.7px;height:14px;line-height:14px;color:#222;font-size:8.05px;-webkit-text-stroke:0.15px #222;">Dynamic_Card_View1</div>
<div class="a t" style="left:919.0px;top:708.8px;height:14px;line-height:14px;color:#fff;font-size:8.05px;-webkit-text-stroke:0.35px #fff;">.Get Card View By Id</div>
</div></div>
<div class="a" style="left:635.6px;top:705.2px;width:370.4px;height:7.2px;background:#c8c8c8;border-radius:4px"></div>
<div class="a" style="left:1055.0px;top:229.0px;width:154.6px;height:39.3px;background:#fea72a;border-radius:0 0 0 5px"></div>
<div class="a" style="left:1075.4px;top:229.0px;width:170.8px;height:31.9px;background:#5e35b1;border-radius:0 0 0 4px"></div>
<div class="a t" style="right:130.0px;top:228.0px;height:14px;line-height:14px;color:#fff;font-size:8.05px;text-align:right;-webkit-text-stroke:0.35px #fff;">coloumId</div>
<div class="a t" style="right:130.0px;top:241.8px;height:14px;line-height:14px;color:#fff;font-size:8.05px;text-align:right;-webkit-text-stroke:0.35px #fff;">row Number</div>
<div class="a" style="left:1246.0px;top:229.0px;width:33.7px;height:11.7px;background:#d81b60;"></div>
<div class="a" style="left:1242.0px;top:231.6px;width:4.5px;height:7.4px;background:#d81b60;border-radius:3px 0 0 3px"></div>
<div class="a" style="left:1250.0px;top:232.0px;width:3.0px;height:2.0px;background:#fff;"></div>
<div class="a" style="left:1271.7px;top:232.0px;width:3.0px;height:2.0px;background:#fff;"></div>
<div class="a" style="left:1256.0px;top:231.0px;width:12.7px;height:7.7px;background:#eba3bf;border-radius:3px"></div>
<div class="a t" style="left:1259.0px;top:228.5px;height:14px;line-height:14px;color:#222;font-size:8.05px;-webkit-text-stroke:0.15px #222;">G</div>
<div class="a" style="left:1246.0px;top:241.7px;width:92.0px;height:19.2px;background:#3f50b4;"></div>
<div class="a" style="left:1242.0px;top:244.3px;width:4.5px;height:7.4px;background:#3f50b4;border-radius:3px 0 0 3px"></div>
<div class="a" style="left:1251.0px;top:244.7px;width:47.7px;height:14.5px;background:#f4511e;box-shadow:inset 0 0 0 0.8px rgba(255,255,255,.4)"></div>
<div class="a" style="left:1247.0px;top:247.3px;width:4.5px;height:7.4px;background:#f4511e;border-radius:3px 0 0 3px"></div>
<div class="a t" style="left:1257.0px;top:245.4px;height:14px;line-height:14px;color:#fff;font-size:8.05px;-webkit-text-stroke:0.35px #fff;">get</div>
<div class="a" style="left:1270.5px;top:247.4px;width:24.2px;height:9.0px;background:#f9ac93;border-radius:3px"></div>
<div class="a t" style="left:1273.5px;top:245.6px;height:14px;line-height:14px;color:#222;font-size:8.05px;-webkit-text-stroke:0.15px #222;">id</div>
<div class="a" style="left:1287.2px;top:250.8px;width:0;height:0;border-left:2px solid transparent;border-right:2px solid transparent;border-top:2.6px solid #f4511e"></div>
<div class="a" style="left:1055.5px;top:284.7px;width:173.1px;height:26.1px;background:#fea72a;border-radius:5px 5px 0 0"></div>
<div class="a" style="left:1055.5px;top:284.7px;width:19.9px;height:96.6px;background:#fea72a;border-radius:5px 0 0 5px"></div>
<div class="a" style="left:1055.5px;top:374.8px;width:173.1px;height:6.5px;background:#fea72a;border-radius:0 0 0 5px"></div>
<div class="a t" style="left:1061.0px;top:284.7px;height:14px;line-height:14px;color:#fff;font-size:8.05px;-webkit-text-stroke:0.35px #fff;">when</div>
<div class="a" style="left:1085.0px;top:287.9px;width:104.0px;height:9.0px;background:#fed79f;border-radius:3px"></div>
<div class="a t" style="left:1088.0px;top:286.1px;height:14px;line-height:14px;color:#222;font-size:8.05px;-webkit-text-stroke:0.15px #222;">Spreadsheet_Extension1</div>
<div class="a" style="left:1181.5px;top:291.2px;width:0;height:0;border-left:2px solid transparent;border-right:2px solid transparent;border-top:2.6px solid #fff"></div>
<div class="a t" style="left:1192.0px;top:284.7px;height:14px;line-height:14px;color:#fff;font-size:8.05px;-webkit-text-stroke:0.35px #fff;">.Got Cell</div>
<div class="a" style="left:1066.0px;top:301.2px;width:24.0px;height:9.0px;background:#d98c69;border-radius:3px"></div>
<div class="a t" style="left:1069.0px;top:299.4px;height:14px;line-height:14px;color:#222;font-size:8.05px;-webkit-text-stroke:0.15px #222;">value</div>
<div class="a t" style="left:1061.0px;top:312.0px;height:14px;line-height:14px;color:#fff;font-size:8.05px;-webkit-text-stroke:0.35px #fff;">do</div>
<div class="a" style="left:1075.4px;top:312.0px;width:44.0px;height:62.8px;background:#ffab00;border-radius:4px 0 0 4px"></div>
<div class="a" style="left:1075.4px;top:312.0px;width:0.9px;height:62.8px;background:#ffd27a;"></div>
<svg class="a" style="left:1082px;top:315px" width="8" height="8" viewBox="0 0 8 8"><rect width="8" height="8" rx="1.2" fill="#5b3bb5"/><circle cx="4" cy="4" r="1.9" fill="none" stroke="#ffd98a" stroke-width=".9"/><path d="M4 1v1.2M4 5.8V7M1 4h1.2M5.8 4H7M1.9 1.9l.9.9M5.2 5.2l.9.9M1.9 6.1l.9-.9M5.2 2.8l.9-.9" stroke="#ffd98a" stroke-width=".8"/></svg>
<div class="a t" style="left:1095.0px;top:312.5px;height:14px;line-height:14px;color:#fff;font-size:8.05px;-webkit-text-stroke:0.35px #fff;">if</div>
<div class="a t" style="left:1081.0px;top:327.0px;height:14px;line-height:14px;color:#fff;font-size:8.05px;-webkit-text-stroke:0.35px #fff;">then</div>
<div class="a" style="left:1117.0px;top:312.4px;width:29.0px;height:13.4px;background:#45a047;"></div>
<div class="a" style="left:1113.0px;top:315.0px;width:4.5px;height:7.4px;background:#45a047;border-radius:3px 0 0 3px"></div>
<div class="a t" style="left:1123.0px;top:312.5px;height:14px;line-height:14px;color:#fff;font-size:8.05px;-webkit-text-stroke:0.35px #fff;">not</div>
<div class="a" style="left:1146.0px;top:312.4px;width:45.0px;height:13.4px;background:#d81b60;"></div>
<div class="a" style="left:1142.0px;top:315.0px;width:4.5px;height:7.4px;background:#d81b60;border-radius:3px 0 0 3px"></div>
<div class="a t" style="left:1151.0px;top:312.5px;height:14px;line-height:14px;color:#fff;font-size:8.05px;-webkit-text-stroke:0.35px #fff;">is empty</div>
<div class="a" style="left:1191.0px;top:312.4px;width:56.0px;height:13.4px;background:#f4511e;box-shadow:inset 0 0 0 0.8px rgba(255,255,255,.4)"></div>
<div class="a" style="left:1187.0px;top:315.0px;width:4.5px;height:7.4px;background:#f4511e;border-radius:3px 0 0 3px"></div>
<div class="a t" style="left:1197.0px;top:312.6px;height:14px;line-height:14px;color:#fff;font-size:8.05px;-webkit-text-stroke:0.35px #fff;">get</div>
<div class="a" style="left:1210.5px;top:314.9px;width:32.5px;height:8.4px;background:#f9ac93;border-radius:3px"></div>
<div class="a t" style="left:1213.5px;top:312.8px;height:14px;line-height:14px;color:#222;font-size:8.05px;-webkit-text-stroke:0.15px #222;">value</div>
<div class="a" style="left:1235.5px;top:317.9px;width:0;height:0;border-left:2px solid transparent;border-right:2px solid transparent;border-top:2.6px solid #f4511e"></div>
<div class="a" style="left:1102.7px;top:327.0px;width:242.9px;height:13.1px;background:#388e3c;border-radius:4px 0 0 0"></div>
<div class="a t" style="left:1108.0px;top:327.0px;height:14px;line-height:14px;color:#fff;font-size:8.05px;-webkit-text-stroke:0.35px #fff;">set</div>
<div class="a" style="left:1124.0px;top:329.1px;width:120.0px;height:9.0px;background:#9cc89e;border-radius:3px"></div>
<div class="a t" style="left:1127.0px;top:327.3px;height:14px;line-height:14px;color:#222;font-size:8.05px;-webkit-text-stroke:0.15px #222;">Vertical_Scroll_Arrangement3</div>
<div class="a" style="left:1236.5px;top:332.4px;width:0;height:0;border-left:2px solid transparent;border-right:2px solid transparent;border-top:2.6px solid #388e3c"></div>
<div class="a t" style="left:1248.0px;top:327.0px;height:14px;line-height:14px;color:#fff;font-size:8.05px;-webkit-text-stroke:0.35px #fff;">.</div>
<div class="a" style="left:1252.0px;top:329.1px;width:37.0px;height:9.0px;background:#9cc89e;border-radius:3px"></div>
<div class="a t" style="left:1255.0px;top:327.3px;height:14px;line-height:14px;color:#222;font-size:8.05px;-webkit-text-stroke:0.15px #222;">Visible</div>
<div class="a" style="left:1281.5px;top:332.4px;width:0;height:0;border-left:2px solid transparent;border-right:2px solid transparent;border-top:2.6px solid #388e3c"></div>
<div class="a t" style="left:1294.0px;top:327.0px;height:14px;line-height:14px;color:#fff;font-size:8.05px;-webkit-text-stroke:0.35px #fff;">to</div>
<div class="a" style="left:1311.0px;top:327.5px;width:34.6px;height:12.6px;background:#45a047;"></div>
<div class="a" style="left:1307.0px;top:330.1px;width:4.5px;height:7.4px;background:#45a047;border-radius:3px 0 0 3px"></div>
<div class="a" style="left:1314.0px;top:329.3px;width:27.0px;height:9.0px;background:#a3d0a5;border-radius:3px"></div>
<div class="a t" style="left:1317.0px;top:327.5px;height:14px;line-height:14px;color:#222;font-size:8.05px;-webkit-text-stroke:0.15px #222;">true</div>
<div class="a" style="left:1333.5px;top:332.6px;width:0;height:0;border-left:2px solid transparent;border-right:2px solid transparent;border-top:2.6px solid #45a047"></div>
<div class="a" style="left:1102.7px;top:340.1px;width:196.0px;height:28.5px;background:#ffab00;border-radius:0 0 0 4px;box-shadow:inset 1px 0 0 #ffd27a"></div>
<div class="a t" style="left:1108.0px;top:341.0px;height:14px;line-height:14px;color:#fff;font-size:8.05px;-webkit-text-stroke:0.35px #fff;">open another screen with start value&nbsp; screenName</div>
<div class="a t" style="right:78.0px;top:355.5px;height:14px;line-height:14px;color:#fff;font-size:8.05px;text-align:right;-webkit-text-stroke:0.35px #fff;">startValue</div>
<div class="a" style="left:1298.7px;top:341.3px;width:67.3px;height:12.3px;background:#c23b45;"></div>
<div class="a" style="left:1294.7px;top:343.9px;width:4.5px;height:7.4px;background:#c23b45;border-radius:3px 0 0 3px"></div>
<div class="a" style="left:1302.0px;top:343.3px;width:64.0px;height:8.5px;background:#e6a2a8;border-radius:3px"></div>
<div class="a t" style="left:1305.0px;top:341.2px;height:14px;line-height:14px;color:#222;font-size:8.05px;-webkit-text-stroke:0.15px #222;">BRO_TOURISM</div>
<div class="a" style="left:1298.7px;top:356.3px;width:55.5px;height:12.3px;background:#f4511e;box-shadow:inset 0 0 0 0.8px rgba(255,255,255,.4)"></div>
<div class="a" style="left:1294.7px;top:358.9px;width:4.5px;height:7.4px;background:#f4511e;border-radius:3px 0 0 3px"></div>
<div class="a t" style="left:1304.7px;top:356.0px;height:14px;line-height:14px;color:#fff;font-size:8.05px;-webkit-text-stroke:0.35px #fff;">get</div>
<div class="a" style="left:1318.2px;top:358.8px;width:32.0px;height:7.3px;background:#f9ac93;border-radius:3px"></div>
<div class="a t" style="left:1321.2px;top:356.2px;height:14px;line-height:14px;color:#222;font-size:8.05px;-webkit-text-stroke:0.15px #222;">value</div>
<div class="a" style="left:1342.7px;top:361.3px;width:0;height:0;border-left:2px solid transparent;border-right:2px solid transparent;border-top:2.6px solid #f4511e"></div>
<div class="a" style="left:1066.7px;top:547.0px;width:180.3px;height:27.0px;background:#fea72a;border-radius:5px 5px 0 0"></div>
<div class="a" style="left:1066.7px;top:547.0px;width:19.8px;height:82.0px;background:#fea72a;border-radius:5px 0 0 5px"></div>
<div class="a" style="left:1066.7px;top:622.0px;width:180.3px;height:7.0px;background:#fea72a;border-radius:0 0 0 5px"></div>
<div class="a t" style="left:1072.0px;top:547.0px;height:14px;line-height:14px;color:#fff;font-size:8.05px;-webkit-text-stroke:0.35px #fff;">when</div>
<div class="a" style="left:1096.0px;top:549.2px;width:77.0px;height:9.0px;background:#fed79f;border-radius:3px"></div>
<div class="a t" style="left:1099.0px;top:547.5px;height:14px;line-height:14px;color:#222;font-size:8.05px;-webkit-text-stroke:0.15px #222;">Dynamic_Button1</div>
<div class="a" style="left:1165.5px;top:552.5px;width:0;height:0;border-left:2px solid transparent;border-right:2px solid transparent;border-top:2.6px solid #fff"></div>
<div class="a t" style="left:1176.0px;top:547.0px;height:14px;line-height:14px;color:#fff;font-size:8.05px;-webkit-text-stroke:0.35px #fff;">.Button Long Click</div>
<div class="a" style="left:1076.0px;top:562.2px;width:13.0px;height:9.0px;background:#d98c69;border-radius:3px"></div>
<div class="a t" style="left:1079.0px;top:560.5px;height:14px;line-height:14px;color:#222;font-size:8.05px;-webkit-text-stroke:0.15px #222;">id</div>
<div class="a t" style="left:1072.0px;top:575.0px;height:14px;line-height:14px;color:#fff;font-size:8.05px;-webkit-text-stroke:0.35px #fff;">do</div>
<div class="a" style="left:1086.5px;top:575.2px;width:170.5px;height:46.9px;background:#5e35b1;border-radius:4px 0 0 4px"></div>
<div class="a t" style="left:1092.5px;top:575.2px;height:14px;line-height:14px;color:#fff;font-size:8.05px;-webkit-text-stroke:0.35px #fff;">call</div>
<div class="a" style="left:1109.5px;top:577.2px;width:103.5px;height:9.0px;background:#bfade4;border-radius:3px"></div>
<div class="a t" style="left:1112.5px;top:575.4px;height:14px;line-height:14px;color:#222;font-size:8.05px;-webkit-text-stroke:0.15px #222;">Spreadsheet_Extension2</div>
<div class="a" style="left:1205.5px;top:580.5px;width:0;height:0;border-left:2px solid transparent;border-right:2px solid transparent;border-top:2.6px solid #5e35b1"></div>
<div class="a t" style="left:1216.0px;top:575.2px;height:14px;line-height:14px;color:#fff;font-size:8.05px;-webkit-text-stroke:0.35px #fff;">.Get Cell</div>
<div class="a t" style="right:119.0px;top:588.7px;height:14px;line-height:14px;color:#fff;font-size:8.05px;text-align:right;-webkit-text-stroke:0.35px #fff;">coloumId</div>
<div class="a t" style="right:119.0px;top:602.7px;height:14px;line-height:14px;color:#fff;font-size:8.05px;text-align:right;-webkit-text-stroke:0.35px #fff;">row Number</div>
<div class="a" style="left:1257.0px;top:588.6px;width:33.6px;height:13.4px;background:#d81b60;"></div>
<div class="a" style="left:1253.0px;top:591.2px;width:4.5px;height:7.4px;background:#d81b60;border-radius:3px 0 0 3px"></div>
<div class="a" style="left:1261.0px;top:591.6px;width:3.0px;height:2.0px;background:#fff;"></div>
<div class="a" style="left:1282.6px;top:591.6px;width:3.0px;height:2.0px;background:#fff;"></div>
<div class="a" style="left:1267.0px;top:590.8px;width:12.6px;height:9.0px;background:#eba3bf;border-radius:3px"></div>
<div class="a t" style="left:1270.0px;top:589.0px;height:14px;line-height:14px;color:#222;font-size:8.05px;-webkit-text-stroke:0.15px #222;">H</div>
<div class="a" style="left:1257.0px;top:602.5px;width:91.4px;height:18.9px;background:#3f50b4;"></div>
<div class="a" style="left:1253.0px;top:605.1px;width:4.5px;height:7.4px;background:#3f50b4;border-radius:3px 0 0 3px"></div>
<div class="a" style="left:1265.0px;top:606.0px;width:44.5px;height:13.8px;background:#f4511e;box-shadow:inset 0 0 0 0.8px rgba(255,255,255,.4)"></div>
<div class="a" style="left:1261.0px;top:608.6px;width:4.5px;height:7.4px;background:#f4511e;border-radius:3px 0 0 3px"></div>
<div class="a t" style="left:1271.0px;top:606.4px;height:14px;line-height:14px;color:#fff;font-size:8.05px;-webkit-text-stroke:0.35px #fff;">get</div>
<div class="a" style="left:1284.5px;top:608.5px;width:21.0px;height:8.8px;background:#f9ac93;border-radius:3px"></div>
<div class="a t" style="left:1287.5px;top:606.6px;height:14px;line-height:14px;color:#222;font-size:8.05px;-webkit-text-stroke:0.15px #222;">id</div>
<div class="a" style="left:1298.0px;top:611.7px;width:0;height:0;border-left:2px solid transparent;border-right:2px solid transparent;border-top:2.6px solid #f4511e"></div>
<div class="a t" style="left:1315.0px;top:605.5px;height:14px;line-height:14px;color:#fff;font-size:8.05px;-webkit-text-stroke:0.35px #fff;">-</div>
<div class="a" style="left:1322.0px;top:604.5px;width:22.0px;height:15.0px;background:#3f50b4;box-shadow:inset 0 0 0 1px #7d8ad0"></div>
<div class="a" style="left:1055.0px;top:634.3px;width:161.0px;height:27.7px;background:#fea72a;border-radius:5px 5px 0 0"></div>
<div class="a" style="left:1055.0px;top:634.3px;width:21.0px;height:81.7px;background:#fea72a;border-radius:5px 0 0 0"></div>
<div class="a" style="left:1055.0px;top:710.6px;width:161.0px;height:5.4px;background:#fea72a;"></div>
<div class="a t" style="left:1061.0px;top:634.5px;height:14px;line-height:14px;color:#fff;font-size:8.05px;-webkit-text-stroke:0.35px #fff;">when</div>
<div class="a" style="left:1085.0px;top:636.8px;width:77.0px;height:9.0px;background:#fed79f;border-radius:3px"></div>
<div class="a t" style="left:1088.0px;top:635.0px;height:14px;line-height:14px;color:#222;font-size:8.05px;-webkit-text-stroke:0.15px #222;">Dynamic_Button1</div>
<div class="a" style="left:1154.5px;top:640.0px;width:0;height:0;border-left:2px solid transparent;border-right:2px solid transparent;border-top:2.6px solid #fff"></div>
<div class="a t" style="left:1166.0px;top:634.5px;height:14px;line-height:14px;color:#fff;font-size:8.05px;-webkit-text-stroke:0.35px #fff;">.Button Click</div>
<div class="a" style="left:1066.0px;top:650.2px;width:13.0px;height:9.0px;background:#d98c69;border-radius:3px"></div>
<div class="a t" style="left:1069.0px;top:648.5px;height:14px;line-height:14px;color:#222;font-size:8.05px;-webkit-text-stroke:0.15px #222;">id</div>
<div class="a t" style="left:1061.0px;top:662.0px;height:14px;line-height:14px;color:#fff;font-size:8.05px;-webkit-text-stroke:0.35px #fff;">do</div>
<div class="a" style="left:1076.0px;top:662.0px;width:170.0px;height:48.6px;background:#5e35b1;border-radius:4px 0 0 4px"></div>
<div class="a t" style="left:1082.0px;top:662.0px;height:14px;line-height:14px;color:#fff;font-size:8.05px;-webkit-text-stroke:0.35px #fff;">call</div>
<div class="a" style="left:1099.0px;top:664.0px;width:103.0px;height:9.0px;background:#bfade4;border-radius:3px"></div>
<div class="a t" style="left:1102.0px;top:662.2px;height:14px;line-height:14px;color:#222;font-size:8.05px;-webkit-text-stroke:0.15px #222;">Spreadsheet_Extension2</div>
<div class="a" style="left:1194.5px;top:667.3px;width:0;height:0;border-left:2px solid transparent;border-right:2px solid transparent;border-top:2.6px solid #5e35b1"></div>
<div class="a t" style="left:1205.0px;top:662.0px;height:14px;line-height:14px;color:#fff;font-size:8.05px;-webkit-text-stroke:0.35px #fff;">.Get Cell</div>
<div class="a t" style="right:130.0px;top:675.5px;height:14px;line-height:14px;color:#fff;font-size:8.05px;text-align:right;-webkit-text-stroke:0.35px #fff;">coloumId</div>
<div class="a t" style="right:130.0px;top:689.5px;height:14px;line-height:14px;color:#fff;font-size:8.05px;text-align:right;-webkit-text-stroke:0.35px #fff;">row Number</div>
<div class="a" style="left:1246.0px;top:676.0px;width:33.5px;height:13.0px;background:#d81b60;"></div>
<div class="a" style="left:1242.0px;top:678.6px;width:4.5px;height:7.4px;background:#d81b60;border-radius:3px 0 0 3px"></div>
<div class="a" style="left:1250.0px;top:679.0px;width:3.0px;height:2.0px;background:#fff;"></div>
<div class="a" style="left:1271.5px;top:679.0px;width:3.0px;height:2.0px;background:#fff;"></div>
<div class="a" style="left:1256.0px;top:678.0px;width:12.5px;height:9.0px;background:#eba3bf;border-radius:3px"></div>
<div class="a t" style="left:1259.0px;top:676.2px;height:14px;line-height:14px;color:#222;font-size:8.05px;-webkit-text-stroke:0.15px #222;">H</div>
<div class="a" style="left:1246.0px;top:690.2px;width:92.0px;height:19.2px;background:#3f50b4;"></div>
<div class="a" style="left:1242.0px;top:692.8px;width:4.5px;height:7.4px;background:#3f50b4;border-radius:3px 0 0 3px"></div>
<div class="a" style="left:1251.0px;top:693.0px;width:47.7px;height:14.0px;background:#f4511e;box-shadow:inset 0 0 0 0.8px rgba(255,255,255,.4)"></div>
<div class="a" style="left:1247.0px;top:695.6px;width:4.5px;height:7.4px;background:#f4511e;border-radius:3px 0 0 3px"></div>
<div class="a t" style="left:1257.0px;top:693.5px;height:14px;line-height:14px;color:#fff;font-size:8.05px;-webkit-text-stroke:0.35px #fff;">get</div>
<div class="a" style="left:1270.5px;top:695.5px;width:24.2px;height:9.0px;background:#f9ac93;border-radius:3px"></div>
<div class="a t" style="left:1273.5px;top:693.7px;height:14px;line-height:14px;color:#222;font-size:8.05px;-webkit-text-stroke:0.15px #222;">id</div>
<div class="a" style="left:1287.2px;top:698.8px;width:0;height:0;border-left:2px solid transparent;border-right:2px solid transparent;border-top:2.6px solid #f4511e"></div>
<div class="a t" style="left:1304.0px;top:693.5px;height:14px;line-height:14px;color:#fff;font-size:8.05px;-webkit-text-stroke:0.35px #fff;">-</div>
<div class="a" style="left:1316.0px;top:692.0px;width:16.7px;height:16.0px;background:#3f50b4;box-shadow:inset 0 0 0 0.8px rgba(255,255,255,.4)"></div>
<div class="a" style="left:1312.0px;top:694.6px;width:4.5px;height:7.4px;background:#3f50b4;border-radius:3px 0 0 3px"></div>
<div class="a" style="left:1319.0px;top:695.5px;width:10.7px;height:9.0px;background:#a0a8d9;border-radius:3px"></div>
<div class="a t" style="left:1322.0px;top:693.7px;height:14px;line-height:14px;color:#222;font-size:8.05px;-webkit-text-stroke:0.15px #222;">1</div>
<div class="a" style="left:334.0px;top:601.7px;width:187.7px;height:13.1px;background:#fea72a;border-radius:5px 5px 0 0"></div>
<div class="a" style="left:334.0px;top:601.7px;width:20.7px;height:47.6px;background:#fea72a;border-radius:5px 0 0 5px"></div>
<div class="a" style="left:334.0px;top:642.8px;width:187.7px;height:6.5px;background:#fea72a;border-radius:0 0 0 5px"></div>
<div class="a t" style="left:340.0px;top:602.0px;height:14px;line-height:14px;color:#fff;font-size:8.05px;-webkit-text-stroke:0.35px #fff;">when</div>
<div class="a" style="left:364.0px;top:603.8px;width:82.0px;height:9.0px;background:#fed79f;border-radius:3px"></div>
<div class="a t" style="left:367.0px;top:602.0px;height:14px;line-height:14px;color:#222;font-size:8.05px;-webkit-text-stroke:0.15px #222;">TOURIEST_SITES</div>
<div class="a" style="left:438.5px;top:607.0px;width:0;height:0;border-left:2px solid transparent;border-right:2px solid transparent;border-top:2.6px solid #fff"></div>
<div class="a t" style="left:449.0px;top:602.0px;height:14px;line-height:14px;color:#fff;font-size:8.05px;-webkit-text-stroke:0.35px #fff;">.Side Menu Closed</div>
<div class="a t" style="left:340.0px;top:616.0px;height:14px;line-height:14px;color:#fff;font-size:8.05px;-webkit-text-stroke:0.35px #fff;">do</div>
<div class="a" style="left:354.7px;top:615.8px;width:164.0px;height:27.0px;background:#5e35b1;border-radius:4px 0 0 4px"></div>
<div class="a t" style="left:360.0px;top:616.0px;height:14px;line-height:14px;color:#fff;font-size:8.05px;-webkit-text-stroke:0.35px #fff;">call</div>
<div class="a" style="left:377.0px;top:617.8px;width:86.0px;height:9.0px;background:#bfade4;border-radius:3px"></div>
<div class="a t" style="left:380.0px;top:616.0px;height:14px;line-height:14px;color:#222;font-size:8.05px;-webkit-text-stroke:0.15px #222;">Bottom_Navigation1</div>
<div class="a" style="left:455.5px;top:621.0px;width:0;height:0;border-left:2px solid transparent;border-right:2px solid transparent;border-top:2.6px solid #5e35b1"></div>
<div class="a t" style="left:466.0px;top:616.0px;height:14px;line-height:14px;color:#fff;font-size:8.05px;-webkit-text-stroke:0.35px #fff;">.Select Item</div>
<div class="a t" style="right:857.3px;top:629.5px;height:14px;line-height:14px;color:#fff;font-size:8.05px;text-align:right;-webkit-text-stroke:0.35px #fff;">id</div>
<div class="a" style="left:518.7px;top:629.6px;width:15.3px;height:13.2px;background:#3f50b4;box-shadow:inset 0 0 0 0.8px rgba(255,255,255,.4)"></div>
<div class="a" style="left:514.7px;top:632.2px;width:4.5px;height:7.4px;background:#3f50b4;border-radius:3px 0 0 3px"></div>
<div class="a" style="left:521.7px;top:631.6px;width:9.3px;height:9.2px;background:#a0a8d9;border-radius:3px"></div>
<div class="a t" style="left:524.7px;top:629.9px;height:14px;line-height:14px;color:#222;font-size:8.05px;-webkit-text-stroke:0.15px #222;">4</div>
<div class="a" style="left:334.0px;top:656.7px;width:140.9px;height:13.3px;background:#fea72a;border-radius:5px 5px 0 0"></div>
<div class="a" style="left:334.0px;top:656.7px;width:21.0px;height:47.6px;background:#fea72a;border-radius:5px 0 0 5px"></div>
<div class="a" style="left:334.0px;top:697.8px;width:140.9px;height:6.5px;background:#fea72a;border-radius:0 0 0 5px"></div>
<div class="a t" style="left:340.0px;top:657.0px;height:14px;line-height:14px;color:#fff;font-size:8.05px;-webkit-text-stroke:0.35px #fff;">when</div>
<div class="a" style="left:364.0px;top:659.0px;width:48.0px;height:9.0px;background:#fed79f;border-radius:3px"></div>
<div class="a t" style="left:367.0px;top:657.2px;height:14px;line-height:14px;color:#222;font-size:8.05px;-webkit-text-stroke:0.15px #222;">Network1</div>
<div class="a" style="left:404.5px;top:662.3px;width:0;height:0;border-left:2px solid transparent;border-right:2px solid transparent;border-top:2.6px solid #fff"></div>
<div class="a t" style="left:415.0px;top:657.0px;height:14px;line-height:14px;color:#fff;font-size:8.05px;-webkit-text-stroke:0.35px #fff;">.On Disconnect</div>
<div class="a" style="left:355.0px;top:670.0px;width:119.9px;height:27.8px;background:#5e35b1;border-radius:4px 0 0 4px"></div>
<div class="a t" style="left:360.0px;top:670.5px;height:14px;line-height:14px;color:#fff;font-size:8.05px;-webkit-text-stroke:0.35px #fff;">call</div>
<div class="a" style="left:377.0px;top:672.5px;width:44.0px;height:9.0px;background:#bfade4;border-radius:3px"></div>
<div class="a t" style="left:380.0px;top:670.7px;height:14px;line-height:14px;color:#222;font-size:8.05px;-webkit-text-stroke:0.15px #222;">Notifier1</div>
<div class="a" style="left:413.5px;top:675.8px;width:0;height:0;border-left:2px solid transparent;border-right:2px solid transparent;border-top:2.6px solid #5e35b1"></div>
<div class="a t" style="left:424.0px;top:670.5px;height:14px;line-height:14px;color:#fff;font-size:8.05px;-webkit-text-stroke:0.35px #fff;">.Show Alert</div>
<div class="a t" style="right:901.0px;top:684.5px;height:14px;line-height:14px;color:#fff;font-size:8.05px;text-align:right;-webkit-text-stroke:0.35px #fff;">notice</div>
<div class="a" style="left:474.9px;top:684.3px;width:120.9px;height:12.5px;background:#d81b60;"></div>
<div class="a" style="left:470.9px;top:686.9px;width:4.5px;height:7.4px;background:#d81b60;border-radius:3px 0 0 3px"></div>
<div class="a" style="left:478.9px;top:687.3px;width:3.0px;height:2.0px;background:#fff;"></div>
<div class="a" style="left:587.8px;top:687.3px;width:3.0px;height:2.0px;background:#fff;"></div>
<div class="a" style="left:484.9px;top:686.3px;width:99.9px;height:8.5px;background:#eba3bf;border-radius:3px"></div>
<div class="a t" style="left:487.9px;top:684.2px;height:14px;line-height:14px;color:#222;font-size:8.05px;-webkit-text-stroke:0.15px #222;">CONNECT TO NETWORK</div>
<svg class="a" style="left:270px;top:630px" width="17" height="10" viewBox="0 0 17 10"><path d="M1 9L8.5 1 16 9z" fill="#ddd" stroke="#333" stroke-width="0.8"/></svg>
<svg class="a" style="left:270px;top:659px" width="17" height="10" viewBox="0 0 17 10"><path d="M1 1L8.5 9 16 1z" fill="#ddd" stroke="#333" stroke-width="0.8"/></svg>
<svg class="a" style="left:323px;top:630px" width="17" height="10" viewBox="0 0 17 10"><path d="M1 9L8.5 1 16 9z" fill="#ddd" stroke="#333" stroke-width="0.8"/></svg>
<svg class="a" style="left:323px;top:659px" width="17" height="10" viewBox="0 0 17 10"><path d="M1 1L8.5 9 16 1z" fill="#ddd" stroke="#333" stroke-width="0.8"/></svg>
<svg class="a" style="left:270px;top:643px" width="14" height="13" viewBox="0 0 14 13"><path d="M7 1L13 12H1z" fill="#f3ee8a" stroke="#c9c26a" stroke-width="0.8"/><path d="M7 4.5v4M7 9.8v1" stroke="#666" stroke-width="1"/></svg>
<div class="a t" style="left:287.0px;top:643.5px;height:14px;line-height:14px;color:#222;font-size:10px;">0</div>
<svg class="a" style="left:322px;top:643px" width="14" height="14" viewBox="0 0 14 14"><circle cx="7" cy="7" r="6.5" fill="#e84a4a"/><path d="M4 4l6 6M10 4l-6 6" stroke="#fff" stroke-width="1.8"/></svg>
<div class="a t" style="left:338.0px;top:644.0px;height:14px;line-height:14px;color:#222;font-size:10px;">0</div>
<div class="a" style="left:258.3px;top:671.0px;width:96.9px;height:16.6px;background:#ececec;border:1px solid #555"></div>
<div class="a t" style="left:270.5px;top:671.5px;height:16px;line-height:16px;color:#222;font-size:10.5px;">Show Warnings</div>
<svg class="a" style="left:1275px;top:235px" width="85" height="75" viewBox="0 0 85 75"><g stroke="#0b2a22" stroke-width="2.3" stroke-linejoin="round"><path d="M36 13q0-8 6-8t6 8z" fill="#0b2a22"/><path d="M73 22l3 36-4 2-4-36z" fill="#0b2a22"/><path d="M8.5 24l3-6 4 1 2-2 10-1 .5 26H11z" fill="#d7662b"/><path d="M29 16h8l-1-3h6l-1 3h8v26H29z" fill="#45a3d5"/><path d="M50.5 14.5l6 2 2-1 1 3 14 2-10 22H50z" fill="#7e4f8c"/><path d="M16 42h46q8 0 7 12-1 13-14 14H24q-14-1-15-13-1-13 7-13z" fill="#4db6ac"/><path d="M11 54q3 10 16 8 20-2 35-14q5-4 4 3-1 6-8 10-14 8-30 8" fill="none"/><path d="M44 60h11q2-6 0-12" fill="none"/></g></svg>
<div class="a" style="left:1205.4px;top:265.0px;width:85.2px;height:20.6px;background:#fdfbc8;border:1px solid #e2dfa5;box-shadow:1px 1px 2px rgba(0,0,0,.2)"></div>
<div class="a t" style="left:1207.8px;top:268.5px;height:14px;line-height:14px;color:#222;font-size:9.5px;">Method for GetCell</div>
<svg class="a" style="left:1316px;top:535px" width="26" height="26" viewBox="0 0 26 26"><circle cx="13" cy="12.5" r="8.5" fill="none" stroke="#111" stroke-width="1.8"/><circle cx="13" cy="12.5" r="4" fill="#111"/><path d="M13 1v3M13 21v4M1.5 12.5h3M21.5 12.5h3" stroke="#111" stroke-width="1.8"/></svg>
<svg class="a" style="left:1315px;top:569px" width="28" height="28" viewBox="0 0 28 28"><circle cx="14" cy="13" r="11.5" fill="none" stroke="#111" stroke-width="1.6"/><path d="M14 6.5v13M7.5 13h13" stroke="#111" stroke-width="1.8"/></svg>
<svg class="a" style="left:1315px;top:596px" width="28" height="28" viewBox="0 0 28 28"><circle cx="14" cy="13.5" r="11.5" fill="none" stroke="#111" stroke-width="1.6"/><path d="M7.5 13.5h13" stroke="#111" stroke-width="1.8"/></svg>
<svg class="a" style="left:1305px;top:643px" width="35" height="45" viewBox="0 0 35 45"><path d="M0 3h35v5H0z" fill="#111"/><path d="M11 0h13v4H11z" fill="#111"/><path d="M3 9h29v33q0 2-2 2H5q-2 0-2-2z" fill="#111"/></svg>
<div class="a" style="left:1359.5px;top:363.0px;width:6.5px;height:115.0px;background:#c8c8c8;border-radius:3px"></div>
<div class="a" style="left:389.0px;top:342.2px;width:8.0px;height:3.6px;background:#5e35b1;border-radius:0 0 4px 4px"></div>
<div class="a" style="left:389.0px;top:294.5px;width:8.0px;height:3.6px;background:#ffab00;border-radius:0 0 4px 4px"></div>
<div class="a" style="left:389.0px;top:419.3px;width:8.0px;height:3.6px;background:#ffab00;border-radius:0 0 4px 4px"></div>
<div class="a" style="left:361.8px;top:425.4px;width:8.0px;height:3.6px;background:#ffab00;border-radius:0 0 4px 4px"></div>
<div class="a" style="left:361.7px;top:641.8px;width:8.0px;height:3.6px;background:#5e35b1;border-radius:0 0 4px 4px"></div>
<div class="a" style="left:362.0px;top:696.8px;width:8.0px;height:3.6px;background:#5e35b1;border-radius:0 0 4px 4px"></div>
<div class="a" style="left:1093.5px;top:621.1px;width:8.0px;height:3.6px;background:#5e35b1;border-radius:0 0 4px 4px"></div>
<div class="a" style="left:1083.0px;top:709.6px;width:8.0px;height:3.6px;background:#5e35b1;border-radius:0 0 4px 4px"></div>
<div class="a" style="left:1082.4px;top:373.8px;width:8.0px;height:3.6px;background:#ffab00;border-radius:0 0 4px 4px"></div>
<div class="a" style="left:1082.4px;top:259.9px;width:8.0px;height:3.6px;background:#5e35b1;border-radius:0 0 4px 4px"></div>
<div class="a" style="left:1109.7px;top:367.6px;width:8.0px;height:3.6px;background:#ffab00;border-radius:0 0 4px 4px"></div>
<div class="a" style="left:643.9px;top:339.6px;width:8.0px;height:3.6px;background:#5e35b1;border-radius:0 0 4px 4px"></div>
<div class="a" style="left:643.9px;top:395.4px;width:8.0px;height:3.6px;background:#5e35b1;border-radius:0 0 4px 4px"></div>
<div class="a" style="left:643.9px;top:507.5px;width:8.0px;height:3.6px;background:#5e35b1;border-radius:0 0 4px 4px"></div>
<div class="a" style="left:643.9px;top:677.3px;width:8.0px;height:3.6px;background:#5e35b1;border-radius:0 0 4px 4px"></div>
<div class="a" style="left:243.0px;top:229.0px;width:1123.0px;height:1.3px;background:#111;"></div>
<div class="a" style="left:243.0px;top:229.0px;width:1.3px;height:487.0px;background:#111;"></div>
<div class="a" style="left:243.0px;top:714.5px;width:1123.0px;height:1.3px;background:#111;"></div>
<div class="a" style="left:243.0px;top:715.8px;width:1123.0px;height:4.2px;background:#fff;"></div>
<div class="a" style="left:0.0px;top:720.0px;width:1366.0px;height:48.0px;background:#0b3065;"></div>
<svg class="a" style="left:17px;top:736px" width="28" height="22" viewBox="0 0 28 22"><path d="M6 20q-5 0-5-4.5T6 11q1-6 8-6t8 6q5 0 5 4.5T22 20z" fill="#9fc3f3"/><path d="M6 20q-5 0-5-4.5h26q0 4.5-5 4.5z" fill="#6f9de0"/></svg>
<div class="a" style="left:30.0px;top:725.0px;width:16.0px;height:16.0px;background:#f28b8b;border-radius:50%"></div>
<div class="a t" style="left:34.5px;top:726.0px;height:14px;line-height:14px;color:#111;font-size:11px;">1</div>
<div class="a t" style="left:50.5px;top:727.5px;height:16px;line-height:16px;color:#fff;font-size:11.2px;font-weight:bold">80°F</div>
<div class="a t" style="left:50.5px;top:744.5px;height:16px;line-height:16px;color:#d6dbe6;font-size:12.4px;">Mostly cloudy</div>
<svg class="a" style="left:406px;top:733px" width="23" height="23" viewBox="0 0 23 23"><defs><linearGradient id="wl" x1="0" y1="0" x2="1" y2="1"><stop offset="0" stop-color="#7fd8ff"/><stop offset="1" stop-color="#1a9bf0"/></linearGradient></defs><path d="M0 0h11v11H0zM12 0h11v11H12zM0 12h11v11H0zM12 12h11v11H12z" fill="url(#wl)"/></svg>
<div class="a" style="left:442.2px;top:727.8px;width:219.7px;height:31.8px;background:#2a4775;border-radius:16px;border:1px solid #3a5684"></div>
<svg class="a" style="left:453px;top:735px" width="17" height="18" viewBox="0 0 17 18"><circle cx="7" cy="7" r="5.5" fill="none" stroke="#e6e6e6" stroke-width="1.7"/><path d="M11 11l5 6" stroke="#e6e6e6" stroke-width="1.8"/></svg>
<div class="a t" style="left:479.2px;top:735.0px;height:18px;line-height:18px;color:#dfe3ea;font-size:12.8px;">Search</div>
<svg class="a" style="left:610px;top:730px" width="48" height="28" viewBox="0 0 48 28"><path d="M2 20q6-14 10-16M8 22q2-12 6-18M36 22q4-10 8-16M40 24q2-8 6-12" stroke="#8fbf4a" stroke-width="2.2" fill="none"/><ellipse cx="24" cy="25" rx="20" ry="3" fill="#b7d36a"/><circle cx="24" cy="9" r="5.5" fill="#8b5a2b"/><ellipse cx="24" cy="19" rx="6" ry="7" fill="#7a4a22"/><circle cx="24" cy="10" r="3" fill="#d9a56b"/></svg>
<svg class="a" style="left:673px;top:733px" width="26" height="24" viewBox="0 0 26 24"><path d="M1 8h15v15H1z" fill="#6b6b6b"/><path d="M8 1h17v16H8z" fill="#f2f2f2"/></svg>
<svg class="a" style="left:718px;top:732px" width="25" height="25" viewBox="0 0 25 25"><defs><linearGradient id="ed" x1="0" y1="0" x2="1" y2="1"><stop offset="0" stop-color="#35c1f1"/><stop offset=".6" stop-color="#1d8fd8"/><stop offset="1" stop-color="#60d86a"/></linearGradient></defs><circle cx="12.5" cy="12.5" r="12" fill="url(#ed)"/><path d="M8 13q2-6 8-5 5 1 5 6h-10q1 6 8 5-6 4-11-1-1-2 0-5z" fill="#0d4f9e"/></svg>
<svg class="a" style="left:762px;top:733px" width="24" height="22" viewBox="0 0 24 22"><defs><linearGradient id="cpa" x1="0" y1="0" x2="0" y2="1"><stop offset="0" stop-color="#1fa8ff"/><stop offset=".55" stop-color="#6cc36a"/><stop offset="1" stop-color="#ffd23f"/></linearGradient><linearGradient id="cpb" x1="0" y1="0" x2="0" y2="1"><stop offset="0" stop-color="#a55cf0"/><stop offset=".5" stop-color="#f06aa8"/><stop offset="1" stop-color="#ff9a3c"/></linearGradient></defs><path d="M7 1h6q2 0 3 2l1 3H12q-2 0-3 2l-3 9q-1 2-3 2H2q-2 0-1-3L4 4q1-3 3-3z" fill="url(#cpa)"/><path d="M17 21h-6q-2 0-3-2l-1-3h5q2 0 3-2l3-9q1-2 3-2h1q2 0 1 3L20 18q-1 3-3 3z" fill="url(#cpb)"/></svg>
<svg class="a" style="left:806px;top:733px" width="25" height="22" viewBox="0 0 25 22"><path d="M0 2q0-2 2-2h7l2 2h12q2 0 2 2v16q0 2-2 2H2q-2 0-2-2z" fill="#f4b93a"/><path d="M0 6h25v14q0 2-2 2H2q-2 0-2-2z" fill="#ffd257"/><path d="M6 15h13v7H6z" fill="#1e88e5"/></svg>
<div class="a" style="left:851.0px;top:732.0px;width:23.0px;height:24.0px;background:#0d2542;"></div>
<div class="a" style="left:854.0px;top:733.0px;width:16.0px;height:22.0px;background:#f7f9fb;"></div>
<svg class="a" style="left:854px;top:735px" width="16" height="19" viewBox="0 0 16 19"><path d="M3 16L8 3l5 13M6 10l5 5M8 3l3 9" fill="none" stroke="#2f6db5" stroke-width="1.6"/><path d="M11 19l5-5v5z" fill="#e03a2f"/></svg>
<div class="a" style="left:886.3px;top:724.3px;width:39.3px;height:38.9px;background:#223f6e;border-radius:5px"></div>
<svg class="a" style="left:894px;top:732px" width="24" height="24" viewBox="0 0 24 24"><circle cx="12" cy="12" r="11.5" fill="#dd3b2e"/><path d="M12 12L2 6A11.5 11.5 0 0 0 12 23.5z" fill="#2ba24c"/><path d="M12 12l10 -6A11.5 11.5 0 0 1 12 23.5z" fill="#ffcd3f"/><circle cx="12" cy="12" r="5.5" fill="#fff"/><circle cx="12" cy="12" r="4.2" fill="#1a73e8"/></svg>
<div class="a" style="left:898.0px;top:760.0px;width:16.0px;height:3.0px;background:#5fc0ff;border-radius:2px"></div>
<svg class="a" style="left:939px;top:733px" width="23" height="23" viewBox="0 0 23 23"><defs><linearGradient id="ph" x1="0" y1="0" x2="0" y2="1"><stop offset="0" stop-color="#4f8df5"/><stop offset="1" stop-color="#8e62d9"/></linearGradient></defs><rect width="23" height="23" rx="3" fill="url(#ph)"/><path d="M0 21l8-10 6 6 4-3 5 6v1q0 2-2 2H2q-2 0-2-2z" fill="#5ad0ff"/><circle cx="17" cy="5" r="2.3" fill="#fff"/></svg>
<div class="a" style="left:815.0px;top:759.5px;width:6.0px;height:2.5px;background:#9aa5b5;border-radius:2px"></div>
<div class="a" style="left:859.0px;top:759.5px;width:6.0px;height:2.5px;background:#9aa5b5;border-radius:2px"></div>
<div class="a" style="left:947.0px;top:759.5px;width:6.0px;height:2.5px;background:#9aa5b5;border-radius:2px"></div>
<svg class="a" style="left:1077px;top:738px" width="14" height="10" viewBox="0 0 14 10"><path d="M2 8l5-5 5 5" fill="none" stroke="#fff" stroke-width="1.6"/></svg>
<svg class="a" style="left:1106px;top:737px" width="18" height="12" viewBox="0 0 18 12"><path d="M4 11q-3.5 0-3.5-3T4 5q1-4 5.5-4T15 5q2.5 0 2.5 3T15 11z" fill="#e8e8e8"/></svg>
<svg class="a" style="left:1139px;top:734px" width="18" height="18" viewBox="0 0 18 18"><path d="M3 8a6 6 0 0 1 11-3M14 2v3h-3M15 10a6 6 0 0 1-11 3M4 16v-3h3" fill="none" stroke="#eee" stroke-width="1.4"/><circle cx="13" cy="13" r="3.6" fill="#f59b1c"/></svg>
<div class="a t" style="left:1174.3px;top:736.5px;height:16px;line-height:16px;color:#fff;font-size:10.6px;">ENG</div>
<svg class="a" style="left:1215px;top:737px" width="18" height="14" viewBox="0 0 18 14"><path d="M1 5q8-7 16 0M3.5 7.5q5.5-4.5 11 0M6 10q3-2.5 6 0" fill="none" stroke="#fff" stroke-width="1.4"/><circle cx="9" cy="12.5" r="1.3" fill="#fff"/></svg>
<svg class="a" style="left:1239px;top:737px" width="18" height="14" viewBox="0 0 18 14"><path d="M1 5h3l4-3.5v11L4 9H1z" fill="none" stroke="#fff" stroke-width="1.3"/><path d="M11 4q2 3 0 6M13.5 2q3.5 5 0 10" fill="none" stroke="#fff" stroke-width="1.2"/></svg>
<svg class="a" style="left:1265px;top:738px" width="22" height="12" viewBox="0 0 22 12"><rect x="0.8" y="0.8" width="17" height="10.4" rx="2.5" fill="none" stroke="#fff" stroke-width="1.4"/><rect x="3" y="3" width="6" height="6" fill="#fff"/><path d="M19.5 4v4" stroke="#fff" stroke-width="1.6"/></svg>
<div class="a t" style="right:19.5px;top:728.0px;height:16px;line-height:16px;color:#fff;font-size:11.4px;text-align:right;">5:28 PM</div>
<div class="a t" style="right:19.3px;top:744.5px;height:16px;line-height:16px;color:#fff;font-size:11.9px;text-align:right;">14-Jul-25</div>
</body></html>
